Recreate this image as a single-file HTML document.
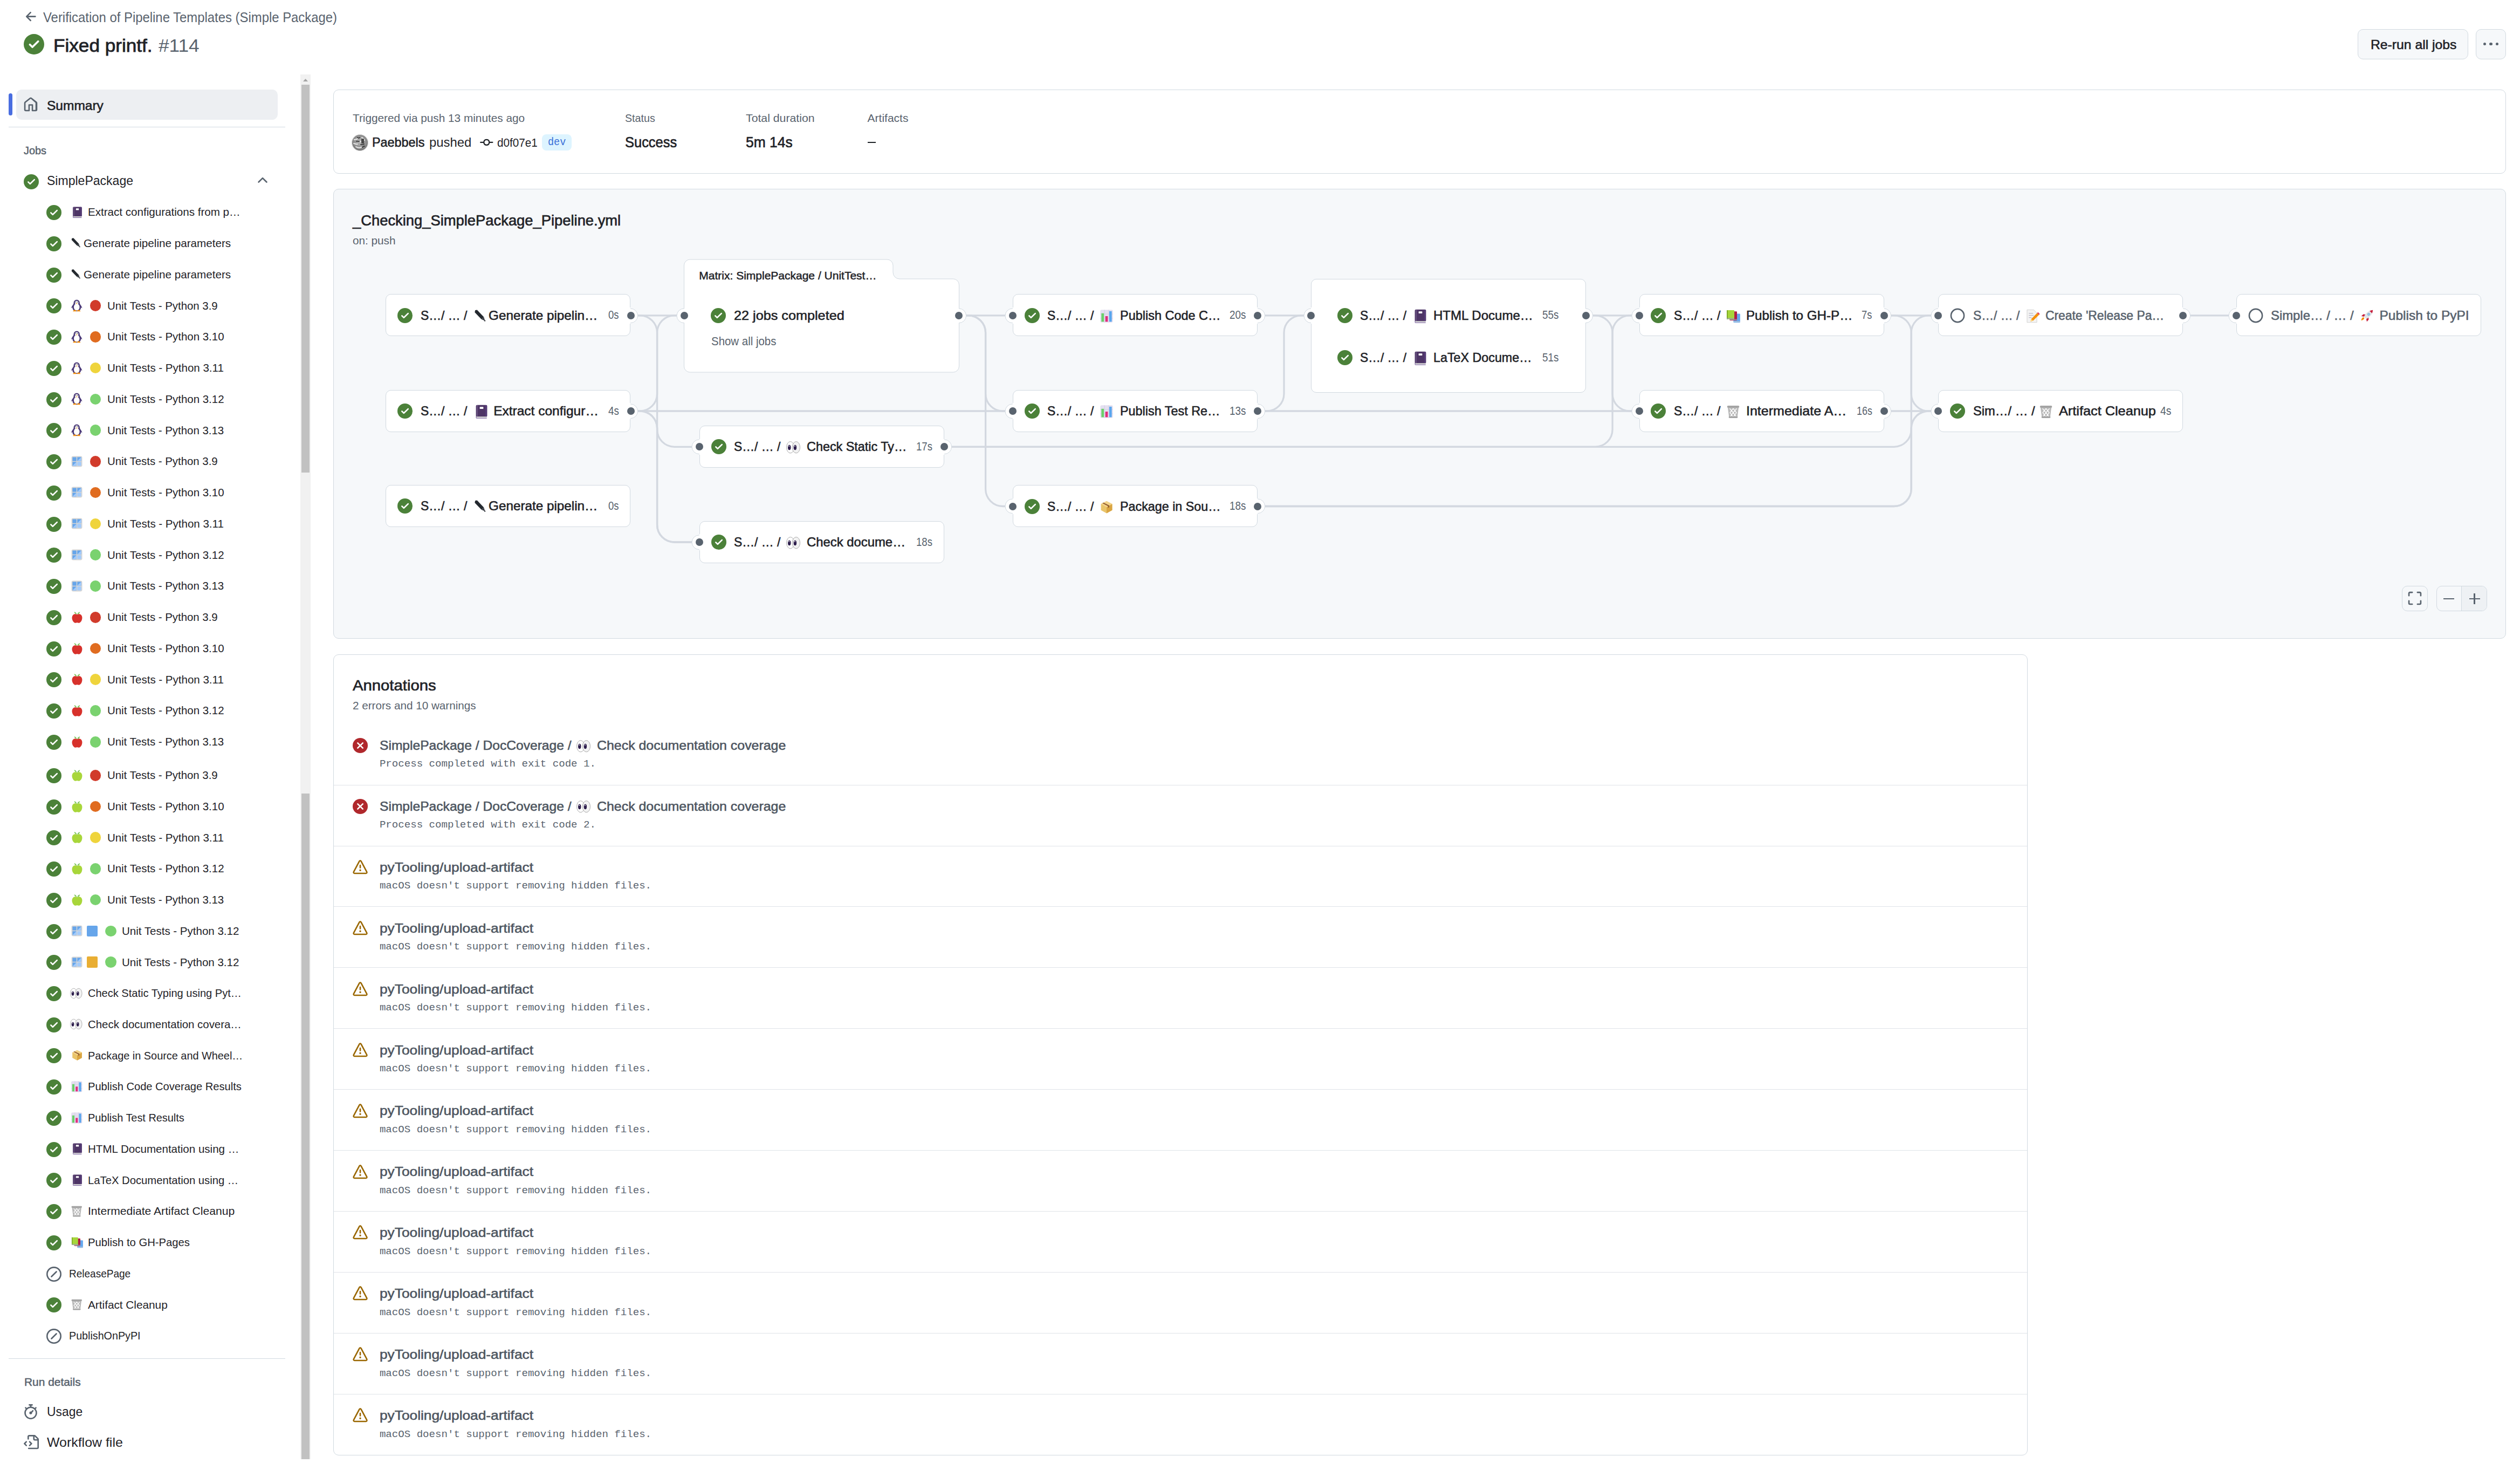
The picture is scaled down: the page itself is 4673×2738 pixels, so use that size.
<!DOCTYPE html><html><head><meta charset="utf-8"><title>GitHub Actions run</title><style>
html,body{margin:0;padding:0;background:#fff;}
body{width:4673px;height:2738px;position:relative;overflow:hidden;font-family:'Liberation Sans',sans-serif;}
.t{position:absolute;white-space:nowrap;transform-origin:0 0;font-family:'Liberation Sans',sans-serif;}
.r{position:absolute;box-sizing:border-box;}
.s{position:absolute;overflow:visible;}
</style></head><body>
<svg class="s" style="left:44.00px;top:17.20px;" width="28.00" height="28.00" viewBox="0 0 16 16"><path fill="#59636e" d="M7.78 12.53a.75.75 0 0 1-1.06 0L2.47 8.28a.75.75 0 0 1 0-1.06l4.25-4.25a.751.751 0 0 1 1.042.018.751.751 0 0 1 .018 1.042L4.81 7h7.44a.75.75 0 0 1 0 1.5H4.81l2.97 2.97a.75.75 0 0 1 0 1.06Z"/></svg>
<div class="t" style="left:80.00px;top:19.09px;font-size:26.00px;line-height:26.00px;color:#59636e;transform:scaleX(0.9183);">Verification of Pipeline Templates (Simple Package)</div>
<svg class="s" style="left:44.00px;top:63.00px;" width="38.00" height="38.00" viewBox="0 0 16 16"><path fill="#4b8139" d="M8 16A8 8 0 1 1 8 0a8 8 0 0 1 0 16Zm3.78-9.72a.749.749 0 0 0-.326-1.275.749.749 0 0 0-.734.215L6.75 9.19 5.28 7.72a.751.751 0 0 0-1.042.018.751.751 0 0 0-.018 1.042l2 2a.75.75 0 0 0 1.06 0Z"/></svg>
<div class="t" style="left:99.00px;top:67.54px;font-size:33.50px;line-height:33.50px;color:#1f2328;-webkit-text-stroke:0.82px #1f2328;transform:scaleX(1.0491);">Fixed printf.</div>
<div class="t" style="left:294.30px;top:67.54px;font-size:33.50px;line-height:33.50px;color:#59636e;transform:scaleX(1.0508);">#114</div>
<div class="r" style="left:4372.00px;top:54.00px;width:205.00px;height:56.00px;background:#f6f8fa;border:1px solid #d1d9e0;border-radius:10px;"></div>
<div class="t" style="left:4395.50px;top:70.76px;font-size:24.50px;line-height:24.50px;color:#1f2328;-webkit-text-stroke:0.60px #1f2328;transform:scaleX(1.0097);">Re-run all jobs</div>
<div class="r" style="left:4591.00px;top:54.00px;width:56.00px;height:56.00px;background:#f6f8fa;border:1px solid #d1d9e0;border-radius:10px;"></div>
<div class="r" style="left:4604.90px;top:78.60px;width:5.20px;height:5.20px;background:#59636e;border-radius:5.2px;"></div>
<div class="r" style="left:4616.40px;top:78.60px;width:5.20px;height:5.20px;background:#59636e;border-radius:5.2px;"></div>
<div class="r" style="left:4627.90px;top:78.60px;width:5.20px;height:5.20px;background:#59636e;border-radius:5.2px;"></div>
<div class="r" style="left:30.00px;top:166.00px;width:485.00px;height:56.00px;background:#edeff2;border-radius:10px;"></div>
<div class="r" style="left:16.00px;top:173.00px;width:7.00px;height:41.00px;background:#4a6ee0;border-radius:4px;"></div>
<svg class="s" style="left:43.25px;top:179.50px;" width="28.00" height="28.00" viewBox="0 0 16 16"><path fill="#59636e" d="M6.906.664a1.749 1.749 0 0 1 2.187 0l5.25 4.2c.415.332.657.835.657 1.367v7.019A1.75 1.75 0 0 1 13.25 15h-3.5a.75.75 0 0 1-.75-.75V9H7v5.25a.75.75 0 0 1-.75.75h-3.5A1.75 1.75 0 0 1 1 13.25V6.23c0-.531.242-1.034.657-1.366l5.25-4.2Zm1.25 1.171a.25.25 0 0 0-.312 0l-5.25 4.2a.25.25 0 0 0-.094.196v7.019c0 .138.112.25.25.25H5.5V8.25a.75.75 0 0 1 .75-.75h3.5a.75.75 0 0 1 .75.75v5.25h2.25a.25.25 0 0 0 .25-.25V6.23a.25.25 0 0 0-.094-.195Z"/></svg>
<div class="t" style="left:87.00px;top:184.26px;font-size:24.50px;line-height:24.50px;color:#1f2328;-webkit-text-stroke:0.60px #1f2328;">Summary</div>
<div class="r" style="left:16.00px;top:234.50px;width:513.00px;height:1.00px;background:#d1d9e0;"></div>
<div class="t" style="left:44.00px;top:268.22px;font-size:21.00px;line-height:21.00px;color:#59636e;-webkit-text-stroke:0.51px #59636e;transform:scaleX(0.9468);">Jobs</div>
<svg class="s" style="left:44.00px;top:323.00px;" width="28.00" height="28.00" viewBox="0 0 16 16"><path fill="#4b8139" d="M8 16A8 8 0 1 1 8 0a8 8 0 0 1 0 16Zm3.78-9.72a.749.749 0 0 0-.326-1.275.749.749 0 0 0-.734.215L6.75 9.19 5.28 7.72a.751.751 0 0 0-1.042.018.751.751 0 0 0-.018 1.042l2 2a.75.75 0 0 0 1.06 0Z"/></svg>
<div class="t" style="left:87.00px;top:323.06px;font-size:24.50px;line-height:24.50px;color:#1f2328;transform:scaleX(0.9399);">SimplePackage</div>
<svg class="s" style="left:472.75px;top:320.25px;" width="28.00" height="28.00" viewBox="0 0 16 16"><path fill="#59636e" d="M3.22 10.53a.749.749 0 0 1 0-1.06l4.25-4.25a.749.749 0 0 1 1.06 0l4.25 4.25a.749.749 0 0 1-1.06 1.06L8 6.811 4.28 10.53a.749.749 0 0 1-1.06 0Z"/></svg>
<svg class="s" style="left:86.00px;top:380.00px;" width="28.00" height="28.00" viewBox="0 0 16 16"><path fill="#4b8139" d="M8 16A8 8 0 1 1 8 0a8 8 0 0 1 0 16Zm3.78-9.72a.749.749 0 0 0-.326-1.275.749.749 0 0 0-.734.215L6.75 9.19 5.28 7.72a.751.751 0 0 0-1.042.018.751.751 0 0 0-.018 1.042l2 2a.75.75 0 0 0 1.06 0Z"/></svg>
<svg class="s" style="left:133.20px;top:382.50px;" width="21.00" height="21.00" viewBox="0 0 20 20"><rect x="2" y="0.5" width="16" height="17" rx="1.6" fill="#4e3566"/><rect x="3.3" y="0.8" width="1.2" height="16.4" fill="#6d5985"/><rect x="15.2" y="0.8" width="2.2" height="16.5" fill="#553b78"/><rect x="7.4" y="3.2" width="5.2" height="3" rx="0.6" fill="#fff"/><path d="M2 17.2h15.5v1.8H3a1 1 0 0 1-1-1Z" fill="#d2d2d2"/><path d="M2 16.5v2.2a1.2 1.2 0 0 0 1.2 1.2H17.5v-0.8H3.2a0.6 0.6 0 0 1 0-1.2" fill="#7a5fa0"/></svg>
<div class="t" style="left:163.40px;top:382.22px;font-size:21.00px;line-height:21.00px;color:#1f2328;transform:scaleX(0.9803);">Extract configurations from p…</div>
<svg class="s" style="left:86.00px;top:437.76px;" width="28.00" height="28.00" viewBox="0 0 16 16"><path fill="#4b8139" d="M8 16A8 8 0 1 1 8 0a8 8 0 0 1 0 16Zm3.78-9.72a.749.749 0 0 0-.326-1.275.749.749 0 0 0-.734.215L6.75 9.19 5.28 7.72a.751.751 0 0 0-1.042.018.751.751 0 0 0-.018 1.042l2 2a.75.75 0 0 0 1.06 0Z"/></svg>
<svg class="s" style="left:130.00px;top:440.26px;" width="21.00" height="21.00" viewBox="0 0 20 20"><path d="M3.2 1.6 L5.9 1.2 L15.6 11.4 L12.2 14.6 L2.6 4.6 Z" fill="#24292f"/><path d="M12.2 14.6 L15.6 11.4 L17.2 16.8 Z" fill="#3b3f46"/><circle cx="17" cy="16.6" r="0.9" fill="#24292f"/></svg>
<div class="t" style="left:155.40px;top:439.98px;font-size:21.00px;line-height:21.00px;color:#1f2328;transform:scaleX(0.9829);">Generate pipeline parameters</div>
<svg class="s" style="left:86.00px;top:495.52px;" width="28.00" height="28.00" viewBox="0 0 16 16"><path fill="#4b8139" d="M8 16A8 8 0 1 1 8 0a8 8 0 0 1 0 16Zm3.78-9.72a.749.749 0 0 0-.326-1.275.749.749 0 0 0-.734.215L6.75 9.19 5.28 7.72a.751.751 0 0 0-1.042.018.751.751 0 0 0-.018 1.042l2 2a.75.75 0 0 0 1.06 0Z"/></svg>
<svg class="s" style="left:130.00px;top:498.02px;" width="21.00" height="21.00" viewBox="0 0 20 20"><path d="M3.2 1.6 L5.9 1.2 L15.6 11.4 L12.2 14.6 L2.6 4.6 Z" fill="#24292f"/><path d="M12.2 14.6 L15.6 11.4 L17.2 16.8 Z" fill="#3b3f46"/><circle cx="17" cy="16.6" r="0.9" fill="#24292f"/></svg>
<div class="t" style="left:155.40px;top:497.74px;font-size:21.00px;line-height:21.00px;color:#1f2328;transform:scaleX(0.9829);">Generate pipeline parameters</div>
<svg class="s" style="left:86.00px;top:553.28px;" width="28.00" height="28.00" viewBox="0 0 16 16"><path fill="#4b8139" d="M8 16A8 8 0 1 1 8 0a8 8 0 0 1 0 16Zm3.78-9.72a.749.749 0 0 0-.326-1.275.749.749 0 0 0-.734.215L6.75 9.19 5.28 7.72a.751.751 0 0 0-1.042.018.751.751 0 0 0-.018 1.042l2 2a.75.75 0 0 0 1.06 0Z"/></svg>
<svg class="s" style="left:131.25px;top:555.03px;" width="22.50" height="22.50" viewBox="0 0 20 20"><path d="M10 0.6c3.2 0 5 2.4 5 5.2 0 1.1.4 2 1.2 3 1.4 1.7 2.4 3.6 2.8 5.6l-2-1c.1 3.6-2.6 6.2-7 6.2s-7.1-2.6-7-6.2l-2 1c.4-2 1.4-3.9 2.8-5.6.8-1 1.2-1.9 1.2-3 0-2.8 1.8-5.2 5-5.2Z" fill="#4b3a78"/><ellipse cx="10" cy="12.6" rx="4.7" ry="5.7" fill="#fff"/><ellipse cx="10" cy="5.5" rx="2.8" ry="3" fill="#fff"/><circle cx="8.7" cy="4.5" r="0.7" fill="#222"/><circle cx="11.3" cy="4.5" r="0.7" fill="#222"/><path d="M8.6 6.3h2.8l-1.4 1.5Z" fill="#f4900c"/><path d="M3.6 19.8 5.2 17.6h3.6l.6 2.2Zm7 0 .6-2.2h3.6l1.6 2.2Z" fill="#f4900c"/></svg>
<div class="r" style="left:166.65px;top:556.23px;width:20.70px;height:20.70px;background:#d13b2b;border-radius:20.7px;"></div>
<div class="t" style="left:198.50px;top:555.50px;font-size:21.00px;line-height:21.00px;color:#1f2328;transform:scaleX(0.9707);">Unit Tests - Python 3.9</div>
<svg class="s" style="left:86.00px;top:611.04px;" width="28.00" height="28.00" viewBox="0 0 16 16"><path fill="#4b8139" d="M8 16A8 8 0 1 1 8 0a8 8 0 0 1 0 16Zm3.78-9.72a.749.749 0 0 0-.326-1.275.749.749 0 0 0-.734.215L6.75 9.19 5.28 7.72a.751.751 0 0 0-1.042.018.751.751 0 0 0-.018 1.042l2 2a.75.75 0 0 0 1.06 0Z"/></svg>
<svg class="s" style="left:131.25px;top:612.79px;" width="22.50" height="22.50" viewBox="0 0 20 20"><path d="M10 0.6c3.2 0 5 2.4 5 5.2 0 1.1.4 2 1.2 3 1.4 1.7 2.4 3.6 2.8 5.6l-2-1c.1 3.6-2.6 6.2-7 6.2s-7.1-2.6-7-6.2l-2 1c.4-2 1.4-3.9 2.8-5.6.8-1 1.2-1.9 1.2-3 0-2.8 1.8-5.2 5-5.2Z" fill="#4b3a78"/><ellipse cx="10" cy="12.6" rx="4.7" ry="5.7" fill="#fff"/><ellipse cx="10" cy="5.5" rx="2.8" ry="3" fill="#fff"/><circle cx="8.7" cy="4.5" r="0.7" fill="#222"/><circle cx="11.3" cy="4.5" r="0.7" fill="#222"/><path d="M8.6 6.3h2.8l-1.4 1.5Z" fill="#f4900c"/><path d="M3.6 19.8 5.2 17.6h3.6l.6 2.2Zm7 0 .6-2.2h3.6l1.6 2.2Z" fill="#f4900c"/></svg>
<div class="r" style="left:166.65px;top:613.99px;width:20.70px;height:20.70px;background:#e06c20;border-radius:20.7px;"></div>
<div class="t" style="left:198.50px;top:613.26px;font-size:21.00px;line-height:21.00px;color:#1f2328;transform:scaleX(0.9728);">Unit Tests - Python 3.10</div>
<svg class="s" style="left:86.00px;top:668.80px;" width="28.00" height="28.00" viewBox="0 0 16 16"><path fill="#4b8139" d="M8 16A8 8 0 1 1 8 0a8 8 0 0 1 0 16Zm3.78-9.72a.749.749 0 0 0-.326-1.275.749.749 0 0 0-.734.215L6.75 9.19 5.28 7.72a.751.751 0 0 0-1.042.018.751.751 0 0 0-.018 1.042l2 2a.75.75 0 0 0 1.06 0Z"/></svg>
<svg class="s" style="left:131.25px;top:670.55px;" width="22.50" height="22.50" viewBox="0 0 20 20"><path d="M10 0.6c3.2 0 5 2.4 5 5.2 0 1.1.4 2 1.2 3 1.4 1.7 2.4 3.6 2.8 5.6l-2-1c.1 3.6-2.6 6.2-7 6.2s-7.1-2.6-7-6.2l-2 1c.4-2 1.4-3.9 2.8-5.6.8-1 1.2-1.9 1.2-3 0-2.8 1.8-5.2 5-5.2Z" fill="#4b3a78"/><ellipse cx="10" cy="12.6" rx="4.7" ry="5.7" fill="#fff"/><ellipse cx="10" cy="5.5" rx="2.8" ry="3" fill="#fff"/><circle cx="8.7" cy="4.5" r="0.7" fill="#222"/><circle cx="11.3" cy="4.5" r="0.7" fill="#222"/><path d="M8.6 6.3h2.8l-1.4 1.5Z" fill="#f4900c"/><path d="M3.6 19.8 5.2 17.6h3.6l.6 2.2Zm7 0 .6-2.2h3.6l1.6 2.2Z" fill="#f4900c"/></svg>
<div class="r" style="left:166.65px;top:671.75px;width:20.70px;height:20.70px;background:#efd43c;border-radius:20.7px;"></div>
<div class="t" style="left:198.50px;top:671.02px;font-size:21.00px;line-height:21.00px;color:#1f2328;transform:scaleX(0.9764);">Unit Tests - Python 3.11</div>
<svg class="s" style="left:86.00px;top:726.56px;" width="28.00" height="28.00" viewBox="0 0 16 16"><path fill="#4b8139" d="M8 16A8 8 0 1 1 8 0a8 8 0 0 1 0 16Zm3.78-9.72a.749.749 0 0 0-.326-1.275.749.749 0 0 0-.734.215L6.75 9.19 5.28 7.72a.751.751 0 0 0-1.042.018.751.751 0 0 0-.018 1.042l2 2a.75.75 0 0 0 1.06 0Z"/></svg>
<svg class="s" style="left:131.25px;top:728.31px;" width="22.50" height="22.50" viewBox="0 0 20 20"><path d="M10 0.6c3.2 0 5 2.4 5 5.2 0 1.1.4 2 1.2 3 1.4 1.7 2.4 3.6 2.8 5.6l-2-1c.1 3.6-2.6 6.2-7 6.2s-7.1-2.6-7-6.2l-2 1c.4-2 1.4-3.9 2.8-5.6.8-1 1.2-1.9 1.2-3 0-2.8 1.8-5.2 5-5.2Z" fill="#4b3a78"/><ellipse cx="10" cy="12.6" rx="4.7" ry="5.7" fill="#fff"/><ellipse cx="10" cy="5.5" rx="2.8" ry="3" fill="#fff"/><circle cx="8.7" cy="4.5" r="0.7" fill="#222"/><circle cx="11.3" cy="4.5" r="0.7" fill="#222"/><path d="M8.6 6.3h2.8l-1.4 1.5Z" fill="#f4900c"/><path d="M3.6 19.8 5.2 17.6h3.6l.6 2.2Zm7 0 .6-2.2h3.6l1.6 2.2Z" fill="#f4900c"/></svg>
<div class="r" style="left:166.65px;top:729.51px;width:20.70px;height:20.70px;background:#7ad26f;border-radius:20.7px;"></div>
<div class="t" style="left:198.50px;top:728.78px;font-size:21.00px;line-height:21.00px;color:#1f2328;transform:scaleX(0.9728);">Unit Tests - Python 3.12</div>
<svg class="s" style="left:86.00px;top:784.32px;" width="28.00" height="28.00" viewBox="0 0 16 16"><path fill="#4b8139" d="M8 16A8 8 0 1 1 8 0a8 8 0 0 1 0 16Zm3.78-9.72a.749.749 0 0 0-.326-1.275.749.749 0 0 0-.734.215L6.75 9.19 5.28 7.72a.751.751 0 0 0-1.042.018.751.751 0 0 0-.018 1.042l2 2a.75.75 0 0 0 1.06 0Z"/></svg>
<svg class="s" style="left:131.25px;top:786.07px;" width="22.50" height="22.50" viewBox="0 0 20 20"><path d="M10 0.6c3.2 0 5 2.4 5 5.2 0 1.1.4 2 1.2 3 1.4 1.7 2.4 3.6 2.8 5.6l-2-1c.1 3.6-2.6 6.2-7 6.2s-7.1-2.6-7-6.2l-2 1c.4-2 1.4-3.9 2.8-5.6.8-1 1.2-1.9 1.2-3 0-2.8 1.8-5.2 5-5.2Z" fill="#4b3a78"/><ellipse cx="10" cy="12.6" rx="4.7" ry="5.7" fill="#fff"/><ellipse cx="10" cy="5.5" rx="2.8" ry="3" fill="#fff"/><circle cx="8.7" cy="4.5" r="0.7" fill="#222"/><circle cx="11.3" cy="4.5" r="0.7" fill="#222"/><path d="M8.6 6.3h2.8l-1.4 1.5Z" fill="#f4900c"/><path d="M3.6 19.8 5.2 17.6h3.6l.6 2.2Zm7 0 .6-2.2h3.6l1.6 2.2Z" fill="#f4900c"/></svg>
<div class="r" style="left:166.65px;top:787.27px;width:20.70px;height:20.70px;background:#7ad26f;border-radius:20.7px;"></div>
<div class="t" style="left:198.50px;top:786.54px;font-size:21.00px;line-height:21.00px;color:#1f2328;transform:scaleX(0.9710);">Unit Tests - Python 3.13</div>
<svg class="s" style="left:86.00px;top:842.08px;" width="28.00" height="28.00" viewBox="0 0 16 16"><path fill="#4b8139" d="M8 16A8 8 0 1 1 8 0a8 8 0 0 1 0 16Zm3.78-9.72a.749.749 0 0 0-.326-1.275.749.749 0 0 0-.734.215L6.75 9.19 5.28 7.72a.751.751 0 0 0-1.042.018.751.751 0 0 0-.018 1.042l2 2a.75.75 0 0 0 1.06 0Z"/></svg>
<svg class="s" style="left:132.00px;top:844.58px;" width="21.00" height="21.00" viewBox="0 0 20 20"><rect x="0.5" y="0.5" width="19" height="19" rx="3" fill="#d6d6d6"/><rect x="2.3" y="2.3" width="7" height="7" rx="0.8" fill="#66a5ea"/><path d="M10.7 2.3h7v7h-7Z" fill="#66a5ea"/><path d="M17.7 2.3v7h-7Z" fill="#a3cbfb"/><path d="M2.3 10.7h7v7h-7Z" fill="#66a5ea"/><path d="M9.3 10.7v7h-7Z" fill="#a3cbfb"/><rect x="10.7" y="10.7" width="7" height="7" rx="0.8" fill="#a3cbfb"/></svg>
<div class="r" style="left:166.65px;top:845.03px;width:20.70px;height:20.70px;background:#d13b2b;border-radius:20.7px;"></div>
<div class="t" style="left:198.50px;top:844.30px;font-size:21.00px;line-height:21.00px;color:#1f2328;transform:scaleX(0.9707);">Unit Tests - Python 3.9</div>
<svg class="s" style="left:86.00px;top:899.84px;" width="28.00" height="28.00" viewBox="0 0 16 16"><path fill="#4b8139" d="M8 16A8 8 0 1 1 8 0a8 8 0 0 1 0 16Zm3.78-9.72a.749.749 0 0 0-.326-1.275.749.749 0 0 0-.734.215L6.75 9.19 5.28 7.72a.751.751 0 0 0-1.042.018.751.751 0 0 0-.018 1.042l2 2a.75.75 0 0 0 1.06 0Z"/></svg>
<svg class="s" style="left:132.00px;top:902.34px;" width="21.00" height="21.00" viewBox="0 0 20 20"><rect x="0.5" y="0.5" width="19" height="19" rx="3" fill="#d6d6d6"/><rect x="2.3" y="2.3" width="7" height="7" rx="0.8" fill="#66a5ea"/><path d="M10.7 2.3h7v7h-7Z" fill="#66a5ea"/><path d="M17.7 2.3v7h-7Z" fill="#a3cbfb"/><path d="M2.3 10.7h7v7h-7Z" fill="#66a5ea"/><path d="M9.3 10.7v7h-7Z" fill="#a3cbfb"/><rect x="10.7" y="10.7" width="7" height="7" rx="0.8" fill="#a3cbfb"/></svg>
<div class="r" style="left:166.65px;top:902.79px;width:20.70px;height:20.70px;background:#e06c20;border-radius:20.7px;"></div>
<div class="t" style="left:198.50px;top:902.06px;font-size:21.00px;line-height:21.00px;color:#1f2328;transform:scaleX(0.9728);">Unit Tests - Python 3.10</div>
<svg class="s" style="left:86.00px;top:957.60px;" width="28.00" height="28.00" viewBox="0 0 16 16"><path fill="#4b8139" d="M8 16A8 8 0 1 1 8 0a8 8 0 0 1 0 16Zm3.78-9.72a.749.749 0 0 0-.326-1.275.749.749 0 0 0-.734.215L6.75 9.19 5.28 7.72a.751.751 0 0 0-1.042.018.751.751 0 0 0-.018 1.042l2 2a.75.75 0 0 0 1.06 0Z"/></svg>
<svg class="s" style="left:132.00px;top:960.10px;" width="21.00" height="21.00" viewBox="0 0 20 20"><rect x="0.5" y="0.5" width="19" height="19" rx="3" fill="#d6d6d6"/><rect x="2.3" y="2.3" width="7" height="7" rx="0.8" fill="#66a5ea"/><path d="M10.7 2.3h7v7h-7Z" fill="#66a5ea"/><path d="M17.7 2.3v7h-7Z" fill="#a3cbfb"/><path d="M2.3 10.7h7v7h-7Z" fill="#66a5ea"/><path d="M9.3 10.7v7h-7Z" fill="#a3cbfb"/><rect x="10.7" y="10.7" width="7" height="7" rx="0.8" fill="#a3cbfb"/></svg>
<div class="r" style="left:166.65px;top:960.55px;width:20.70px;height:20.70px;background:#efd43c;border-radius:20.7px;"></div>
<div class="t" style="left:198.50px;top:959.82px;font-size:21.00px;line-height:21.00px;color:#1f2328;transform:scaleX(0.9764);">Unit Tests - Python 3.11</div>
<svg class="s" style="left:86.00px;top:1015.36px;" width="28.00" height="28.00" viewBox="0 0 16 16"><path fill="#4b8139" d="M8 16A8 8 0 1 1 8 0a8 8 0 0 1 0 16Zm3.78-9.72a.749.749 0 0 0-.326-1.275.749.749 0 0 0-.734.215L6.75 9.19 5.28 7.72a.751.751 0 0 0-1.042.018.751.751 0 0 0-.018 1.042l2 2a.75.75 0 0 0 1.06 0Z"/></svg>
<svg class="s" style="left:132.00px;top:1017.86px;" width="21.00" height="21.00" viewBox="0 0 20 20"><rect x="0.5" y="0.5" width="19" height="19" rx="3" fill="#d6d6d6"/><rect x="2.3" y="2.3" width="7" height="7" rx="0.8" fill="#66a5ea"/><path d="M10.7 2.3h7v7h-7Z" fill="#66a5ea"/><path d="M17.7 2.3v7h-7Z" fill="#a3cbfb"/><path d="M2.3 10.7h7v7h-7Z" fill="#66a5ea"/><path d="M9.3 10.7v7h-7Z" fill="#a3cbfb"/><rect x="10.7" y="10.7" width="7" height="7" rx="0.8" fill="#a3cbfb"/></svg>
<div class="r" style="left:166.65px;top:1018.31px;width:20.70px;height:20.70px;background:#7ad26f;border-radius:20.7px;"></div>
<div class="t" style="left:198.50px;top:1017.58px;font-size:21.00px;line-height:21.00px;color:#1f2328;transform:scaleX(0.9728);">Unit Tests - Python 3.12</div>
<svg class="s" style="left:86.00px;top:1073.12px;" width="28.00" height="28.00" viewBox="0 0 16 16"><path fill="#4b8139" d="M8 16A8 8 0 1 1 8 0a8 8 0 0 1 0 16Zm3.78-9.72a.749.749 0 0 0-.326-1.275.749.749 0 0 0-.734.215L6.75 9.19 5.28 7.72a.751.751 0 0 0-1.042.018.751.751 0 0 0-.018 1.042l2 2a.75.75 0 0 0 1.06 0Z"/></svg>
<svg class="s" style="left:132.00px;top:1075.62px;" width="21.00" height="21.00" viewBox="0 0 20 20"><rect x="0.5" y="0.5" width="19" height="19" rx="3" fill="#d6d6d6"/><rect x="2.3" y="2.3" width="7" height="7" rx="0.8" fill="#66a5ea"/><path d="M10.7 2.3h7v7h-7Z" fill="#66a5ea"/><path d="M17.7 2.3v7h-7Z" fill="#a3cbfb"/><path d="M2.3 10.7h7v7h-7Z" fill="#66a5ea"/><path d="M9.3 10.7v7h-7Z" fill="#a3cbfb"/><rect x="10.7" y="10.7" width="7" height="7" rx="0.8" fill="#a3cbfb"/></svg>
<div class="r" style="left:166.65px;top:1076.07px;width:20.70px;height:20.70px;background:#7ad26f;border-radius:20.7px;"></div>
<div class="t" style="left:198.50px;top:1075.34px;font-size:21.00px;line-height:21.00px;color:#1f2328;transform:scaleX(0.9710);">Unit Tests - Python 3.13</div>
<svg class="s" style="left:86.00px;top:1130.88px;" width="28.00" height="28.00" viewBox="0 0 16 16"><path fill="#4b8139" d="M8 16A8 8 0 1 1 8 0a8 8 0 0 1 0 16Zm3.78-9.72a.749.749 0 0 0-.326-1.275.749.749 0 0 0-.734.215L6.75 9.19 5.28 7.72a.751.751 0 0 0-1.042.018.751.751 0 0 0-.018 1.042l2 2a.75.75 0 0 0 1.06 0Z"/></svg>
<svg class="s" style="left:131.50px;top:1132.88px;" width="22.00" height="22.00" viewBox="0 0 20 20"><path d="M10 5.6c1.8-1 4.4-1.2 6.4.4 2.6 2.2 2.6 6.2 1.4 9.2-1 2.6-3 4.6-5 4.6-1 0-1.6-.5-2.8-.5s-1.8.5-2.8.5c-2 0-4-2-5-4.6-1.2-3-1.2-7 1.4-9.2 2-1.6 4.6-1.4 6.4-.4Z" fill="#d7312b"/><path d="M9.6 5.4C9 3.2 7.4 1.6 5 1.2c.6 2.2 2.2 3.8 4.6 4.2ZM10.4 5.4c.2-2 1.6-3.6 4.4-4.2-.4 2.2-1.8 3.8-4.4 4.2Z" fill="#77c255"/></svg>
<div class="r" style="left:166.65px;top:1133.83px;width:20.70px;height:20.70px;background:#d13b2b;border-radius:20.7px;"></div>
<div class="t" style="left:198.50px;top:1133.10px;font-size:21.00px;line-height:21.00px;color:#1f2328;transform:scaleX(0.9707);">Unit Tests - Python 3.9</div>
<svg class="s" style="left:86.00px;top:1188.64px;" width="28.00" height="28.00" viewBox="0 0 16 16"><path fill="#4b8139" d="M8 16A8 8 0 1 1 8 0a8 8 0 0 1 0 16Zm3.78-9.72a.749.749 0 0 0-.326-1.275.749.749 0 0 0-.734.215L6.75 9.19 5.28 7.72a.751.751 0 0 0-1.042.018.751.751 0 0 0-.018 1.042l2 2a.75.75 0 0 0 1.06 0Z"/></svg>
<svg class="s" style="left:131.50px;top:1190.64px;" width="22.00" height="22.00" viewBox="0 0 20 20"><path d="M10 5.6c1.8-1 4.4-1.2 6.4.4 2.6 2.2 2.6 6.2 1.4 9.2-1 2.6-3 4.6-5 4.6-1 0-1.6-.5-2.8-.5s-1.8.5-2.8.5c-2 0-4-2-5-4.6-1.2-3-1.2-7 1.4-9.2 2-1.6 4.6-1.4 6.4-.4Z" fill="#d7312b"/><path d="M9.6 5.4C9 3.2 7.4 1.6 5 1.2c.6 2.2 2.2 3.8 4.6 4.2ZM10.4 5.4c.2-2 1.6-3.6 4.4-4.2-.4 2.2-1.8 3.8-4.4 4.2Z" fill="#77c255"/></svg>
<div class="r" style="left:166.65px;top:1191.59px;width:20.70px;height:20.70px;background:#e06c20;border-radius:20.7px;"></div>
<div class="t" style="left:198.50px;top:1190.86px;font-size:21.00px;line-height:21.00px;color:#1f2328;transform:scaleX(0.9728);">Unit Tests - Python 3.10</div>
<svg class="s" style="left:86.00px;top:1246.40px;" width="28.00" height="28.00" viewBox="0 0 16 16"><path fill="#4b8139" d="M8 16A8 8 0 1 1 8 0a8 8 0 0 1 0 16Zm3.78-9.72a.749.749 0 0 0-.326-1.275.749.749 0 0 0-.734.215L6.75 9.19 5.28 7.72a.751.751 0 0 0-1.042.018.751.751 0 0 0-.018 1.042l2 2a.75.75 0 0 0 1.06 0Z"/></svg>
<svg class="s" style="left:131.50px;top:1248.40px;" width="22.00" height="22.00" viewBox="0 0 20 20"><path d="M10 5.6c1.8-1 4.4-1.2 6.4.4 2.6 2.2 2.6 6.2 1.4 9.2-1 2.6-3 4.6-5 4.6-1 0-1.6-.5-2.8-.5s-1.8.5-2.8.5c-2 0-4-2-5-4.6-1.2-3-1.2-7 1.4-9.2 2-1.6 4.6-1.4 6.4-.4Z" fill="#d7312b"/><path d="M9.6 5.4C9 3.2 7.4 1.6 5 1.2c.6 2.2 2.2 3.8 4.6 4.2ZM10.4 5.4c.2-2 1.6-3.6 4.4-4.2-.4 2.2-1.8 3.8-4.4 4.2Z" fill="#77c255"/></svg>
<div class="r" style="left:166.65px;top:1249.35px;width:20.70px;height:20.70px;background:#efd43c;border-radius:20.7px;"></div>
<div class="t" style="left:198.50px;top:1248.62px;font-size:21.00px;line-height:21.00px;color:#1f2328;transform:scaleX(0.9764);">Unit Tests - Python 3.11</div>
<svg class="s" style="left:86.00px;top:1304.16px;" width="28.00" height="28.00" viewBox="0 0 16 16"><path fill="#4b8139" d="M8 16A8 8 0 1 1 8 0a8 8 0 0 1 0 16Zm3.78-9.72a.749.749 0 0 0-.326-1.275.749.749 0 0 0-.734.215L6.75 9.19 5.28 7.72a.751.751 0 0 0-1.042.018.751.751 0 0 0-.018 1.042l2 2a.75.75 0 0 0 1.06 0Z"/></svg>
<svg class="s" style="left:131.50px;top:1306.16px;" width="22.00" height="22.00" viewBox="0 0 20 20"><path d="M10 5.6c1.8-1 4.4-1.2 6.4.4 2.6 2.2 2.6 6.2 1.4 9.2-1 2.6-3 4.6-5 4.6-1 0-1.6-.5-2.8-.5s-1.8.5-2.8.5c-2 0-4-2-5-4.6-1.2-3-1.2-7 1.4-9.2 2-1.6 4.6-1.4 6.4-.4Z" fill="#d7312b"/><path d="M9.6 5.4C9 3.2 7.4 1.6 5 1.2c.6 2.2 2.2 3.8 4.6 4.2ZM10.4 5.4c.2-2 1.6-3.6 4.4-4.2-.4 2.2-1.8 3.8-4.4 4.2Z" fill="#77c255"/></svg>
<div class="r" style="left:166.65px;top:1307.11px;width:20.70px;height:20.70px;background:#7ad26f;border-radius:20.7px;"></div>
<div class="t" style="left:198.50px;top:1306.38px;font-size:21.00px;line-height:21.00px;color:#1f2328;transform:scaleX(0.9728);">Unit Tests - Python 3.12</div>
<svg class="s" style="left:86.00px;top:1361.92px;" width="28.00" height="28.00" viewBox="0 0 16 16"><path fill="#4b8139" d="M8 16A8 8 0 1 1 8 0a8 8 0 0 1 0 16Zm3.78-9.72a.749.749 0 0 0-.326-1.275.749.749 0 0 0-.734.215L6.75 9.19 5.28 7.72a.751.751 0 0 0-1.042.018.751.751 0 0 0-.018 1.042l2 2a.75.75 0 0 0 1.06 0Z"/></svg>
<svg class="s" style="left:131.50px;top:1363.92px;" width="22.00" height="22.00" viewBox="0 0 20 20"><path d="M10 5.6c1.8-1 4.4-1.2 6.4.4 2.6 2.2 2.6 6.2 1.4 9.2-1 2.6-3 4.6-5 4.6-1 0-1.6-.5-2.8-.5s-1.8.5-2.8.5c-2 0-4-2-5-4.6-1.2-3-1.2-7 1.4-9.2 2-1.6 4.6-1.4 6.4-.4Z" fill="#d7312b"/><path d="M9.6 5.4C9 3.2 7.4 1.6 5 1.2c.6 2.2 2.2 3.8 4.6 4.2ZM10.4 5.4c.2-2 1.6-3.6 4.4-4.2-.4 2.2-1.8 3.8-4.4 4.2Z" fill="#77c255"/></svg>
<div class="r" style="left:166.65px;top:1364.87px;width:20.70px;height:20.70px;background:#7ad26f;border-radius:20.7px;"></div>
<div class="t" style="left:198.50px;top:1364.14px;font-size:21.00px;line-height:21.00px;color:#1f2328;transform:scaleX(0.9710);">Unit Tests - Python 3.13</div>
<svg class="s" style="left:86.00px;top:1423.90px;" width="28.00" height="28.00" viewBox="0 0 16 16"><path fill="#4b8139" d="M8 16A8 8 0 1 1 8 0a8 8 0 0 1 0 16Zm3.78-9.72a.749.749 0 0 0-.326-1.275.749.749 0 0 0-.734.215L6.75 9.19 5.28 7.72a.751.751 0 0 0-1.042.018.751.751 0 0 0-.018 1.042l2 2a.75.75 0 0 0 1.06 0Z"/></svg>
<svg class="s" style="left:131.50px;top:1425.90px;" width="22.00" height="22.00" viewBox="0 0 20 20"><path d="M10 5.6c1.8-1 4.4-1.2 6.4.4 2.6 2.2 2.6 6.2 1.4 9.2-1 2.6-3 4.6-5 4.6-1 0-1.6-.5-2.8-.5s-1.8.5-2.8.5c-2 0-4-2-5-4.6-1.2-3-1.2-7 1.4-9.2 2-1.6 4.6-1.4 6.4-.4Z" fill="#a8d63a"/><path d="M9.6 5.4C9 3.2 7.4 1.6 5 1.2c.6 2.2 2.2 3.8 4.6 4.2ZM10.4 5.4c.2-2 1.6-3.6 4.4-4.2-.4 2.2-1.8 3.8-4.4 4.2Z" fill="#77c255"/></svg>
<div class="r" style="left:166.65px;top:1426.85px;width:20.70px;height:20.70px;background:#d13b2b;border-radius:20.7px;"></div>
<div class="t" style="left:198.50px;top:1426.12px;font-size:21.00px;line-height:21.00px;color:#1f2328;transform:scaleX(0.9707);">Unit Tests - Python 3.9</div>
<svg class="s" style="left:86.00px;top:1481.63px;" width="28.00" height="28.00" viewBox="0 0 16 16"><path fill="#4b8139" d="M8 16A8 8 0 1 1 8 0a8 8 0 0 1 0 16Zm3.78-9.72a.749.749 0 0 0-.326-1.275.749.749 0 0 0-.734.215L6.75 9.19 5.28 7.72a.751.751 0 0 0-1.042.018.751.751 0 0 0-.018 1.042l2 2a.75.75 0 0 0 1.06 0Z"/></svg>
<svg class="s" style="left:131.50px;top:1483.63px;" width="22.00" height="22.00" viewBox="0 0 20 20"><path d="M10 5.6c1.8-1 4.4-1.2 6.4.4 2.6 2.2 2.6 6.2 1.4 9.2-1 2.6-3 4.6-5 4.6-1 0-1.6-.5-2.8-.5s-1.8.5-2.8.5c-2 0-4-2-5-4.6-1.2-3-1.2-7 1.4-9.2 2-1.6 4.6-1.4 6.4-.4Z" fill="#a8d63a"/><path d="M9.6 5.4C9 3.2 7.4 1.6 5 1.2c.6 2.2 2.2 3.8 4.6 4.2ZM10.4 5.4c.2-2 1.6-3.6 4.4-4.2-.4 2.2-1.8 3.8-4.4 4.2Z" fill="#77c255"/></svg>
<div class="r" style="left:166.65px;top:1484.58px;width:20.70px;height:20.70px;background:#e06c20;border-radius:20.7px;"></div>
<div class="t" style="left:198.50px;top:1483.85px;font-size:21.00px;line-height:21.00px;color:#1f2328;transform:scaleX(0.9728);">Unit Tests - Python 3.10</div>
<svg class="s" style="left:86.00px;top:1539.36px;" width="28.00" height="28.00" viewBox="0 0 16 16"><path fill="#4b8139" d="M8 16A8 8 0 1 1 8 0a8 8 0 0 1 0 16Zm3.78-9.72a.749.749 0 0 0-.326-1.275.749.749 0 0 0-.734.215L6.75 9.19 5.28 7.72a.751.751 0 0 0-1.042.018.751.751 0 0 0-.018 1.042l2 2a.75.75 0 0 0 1.06 0Z"/></svg>
<svg class="s" style="left:131.50px;top:1541.36px;" width="22.00" height="22.00" viewBox="0 0 20 20"><path d="M10 5.6c1.8-1 4.4-1.2 6.4.4 2.6 2.2 2.6 6.2 1.4 9.2-1 2.6-3 4.6-5 4.6-1 0-1.6-.5-2.8-.5s-1.8.5-2.8.5c-2 0-4-2-5-4.6-1.2-3-1.2-7 1.4-9.2 2-1.6 4.6-1.4 6.4-.4Z" fill="#a8d63a"/><path d="M9.6 5.4C9 3.2 7.4 1.6 5 1.2c.6 2.2 2.2 3.8 4.6 4.2ZM10.4 5.4c.2-2 1.6-3.6 4.4-4.2-.4 2.2-1.8 3.8-4.4 4.2Z" fill="#77c255"/></svg>
<div class="r" style="left:166.65px;top:1542.31px;width:20.70px;height:20.70px;background:#efd43c;border-radius:20.7px;"></div>
<div class="t" style="left:198.50px;top:1541.58px;font-size:21.00px;line-height:21.00px;color:#1f2328;transform:scaleX(0.9764);">Unit Tests - Python 3.11</div>
<svg class="s" style="left:86.00px;top:1597.09px;" width="28.00" height="28.00" viewBox="0 0 16 16"><path fill="#4b8139" d="M8 16A8 8 0 1 1 8 0a8 8 0 0 1 0 16Zm3.78-9.72a.749.749 0 0 0-.326-1.275.749.749 0 0 0-.734.215L6.75 9.19 5.28 7.72a.751.751 0 0 0-1.042.018.751.751 0 0 0-.018 1.042l2 2a.75.75 0 0 0 1.06 0Z"/></svg>
<svg class="s" style="left:131.50px;top:1599.09px;" width="22.00" height="22.00" viewBox="0 0 20 20"><path d="M10 5.6c1.8-1 4.4-1.2 6.4.4 2.6 2.2 2.6 6.2 1.4 9.2-1 2.6-3 4.6-5 4.6-1 0-1.6-.5-2.8-.5s-1.8.5-2.8.5c-2 0-4-2-5-4.6-1.2-3-1.2-7 1.4-9.2 2-1.6 4.6-1.4 6.4-.4Z" fill="#a8d63a"/><path d="M9.6 5.4C9 3.2 7.4 1.6 5 1.2c.6 2.2 2.2 3.8 4.6 4.2ZM10.4 5.4c.2-2 1.6-3.6 4.4-4.2-.4 2.2-1.8 3.8-4.4 4.2Z" fill="#77c255"/></svg>
<div class="r" style="left:166.65px;top:1600.04px;width:20.70px;height:20.70px;background:#7ad26f;border-radius:20.7px;"></div>
<div class="t" style="left:198.50px;top:1599.31px;font-size:21.00px;line-height:21.00px;color:#1f2328;transform:scaleX(0.9728);">Unit Tests - Python 3.12</div>
<svg class="s" style="left:86.00px;top:1654.82px;" width="28.00" height="28.00" viewBox="0 0 16 16"><path fill="#4b8139" d="M8 16A8 8 0 1 1 8 0a8 8 0 0 1 0 16Zm3.78-9.72a.749.749 0 0 0-.326-1.275.749.749 0 0 0-.734.215L6.75 9.19 5.28 7.72a.751.751 0 0 0-1.042.018.751.751 0 0 0-.018 1.042l2 2a.75.75 0 0 0 1.06 0Z"/></svg>
<svg class="s" style="left:131.50px;top:1656.82px;" width="22.00" height="22.00" viewBox="0 0 20 20"><path d="M10 5.6c1.8-1 4.4-1.2 6.4.4 2.6 2.2 2.6 6.2 1.4 9.2-1 2.6-3 4.6-5 4.6-1 0-1.6-.5-2.8-.5s-1.8.5-2.8.5c-2 0-4-2-5-4.6-1.2-3-1.2-7 1.4-9.2 2-1.6 4.6-1.4 6.4-.4Z" fill="#a8d63a"/><path d="M9.6 5.4C9 3.2 7.4 1.6 5 1.2c.6 2.2 2.2 3.8 4.6 4.2ZM10.4 5.4c.2-2 1.6-3.6 4.4-4.2-.4 2.2-1.8 3.8-4.4 4.2Z" fill="#77c255"/></svg>
<div class="r" style="left:166.65px;top:1657.77px;width:20.70px;height:20.70px;background:#7ad26f;border-radius:20.7px;"></div>
<div class="t" style="left:198.50px;top:1657.04px;font-size:21.00px;line-height:21.00px;color:#1f2328;transform:scaleX(0.9710);">Unit Tests - Python 3.13</div>
<svg class="s" style="left:86.00px;top:1712.55px;" width="28.00" height="28.00" viewBox="0 0 16 16"><path fill="#4b8139" d="M8 16A8 8 0 1 1 8 0a8 8 0 0 1 0 16Zm3.78-9.72a.749.749 0 0 0-.326-1.275.749.749 0 0 0-.734.215L6.75 9.19 5.28 7.72a.751.751 0 0 0-1.042.018.751.751 0 0 0-.018 1.042l2 2a.75.75 0 0 0 1.06 0Z"/></svg>
<svg class="s" style="left:132.00px;top:1715.05px;" width="21.00" height="21.00" viewBox="0 0 20 20"><rect x="0.5" y="0.5" width="19" height="19" rx="3" fill="#d6d6d6"/><rect x="2.3" y="2.3" width="7" height="7" rx="0.8" fill="#66a5ea"/><path d="M10.7 2.3h7v7h-7Z" fill="#66a5ea"/><path d="M17.7 2.3v7h-7Z" fill="#a3cbfb"/><path d="M2.3 10.7h7v7h-7Z" fill="#66a5ea"/><path d="M9.3 10.7v7h-7Z" fill="#a3cbfb"/><rect x="10.7" y="10.7" width="7" height="7" rx="0.8" fill="#a3cbfb"/></svg>
<div class="r" style="left:160.90px;top:1715.65px;width:20.40px;height:20.40px;background:#66a5ea;border-radius:2px;"></div>
<div class="r" style="left:195.25px;top:1715.50px;width:20.70px;height:20.70px;background:#7ad26f;border-radius:20.7px;"></div>
<div class="t" style="left:226.30px;top:1714.77px;font-size:21.00px;line-height:21.00px;color:#1f2328;transform:scaleX(0.9763);">Unit Tests - Python 3.12</div>
<svg class="s" style="left:86.00px;top:1770.28px;" width="28.00" height="28.00" viewBox="0 0 16 16"><path fill="#4b8139" d="M8 16A8 8 0 1 1 8 0a8 8 0 0 1 0 16Zm3.78-9.72a.749.749 0 0 0-.326-1.275.749.749 0 0 0-.734.215L6.75 9.19 5.28 7.72a.751.751 0 0 0-1.042.018.751.751 0 0 0-.018 1.042l2 2a.75.75 0 0 0 1.06 0Z"/></svg>
<svg class="s" style="left:132.00px;top:1772.78px;" width="21.00" height="21.00" viewBox="0 0 20 20"><rect x="0.5" y="0.5" width="19" height="19" rx="3" fill="#d6d6d6"/><rect x="2.3" y="2.3" width="7" height="7" rx="0.8" fill="#66a5ea"/><path d="M10.7 2.3h7v7h-7Z" fill="#66a5ea"/><path d="M17.7 2.3v7h-7Z" fill="#a3cbfb"/><path d="M2.3 10.7h7v7h-7Z" fill="#66a5ea"/><path d="M9.3 10.7v7h-7Z" fill="#a3cbfb"/><rect x="10.7" y="10.7" width="7" height="7" rx="0.8" fill="#a3cbfb"/></svg>
<div class="r" style="left:160.90px;top:1773.38px;width:20.40px;height:20.40px;background:#e9ae33;border-radius:2px;"></div>
<div class="r" style="left:195.25px;top:1773.23px;width:20.70px;height:20.70px;background:#7ad26f;border-radius:20.7px;"></div>
<div class="t" style="left:226.30px;top:1772.50px;font-size:21.00px;line-height:21.00px;color:#1f2328;transform:scaleX(0.9763);">Unit Tests - Python 3.12</div>
<svg class="s" style="left:86.00px;top:1828.01px;" width="28.00" height="28.00" viewBox="0 0 16 16"><path fill="#4b8139" d="M8 16A8 8 0 1 1 8 0a8 8 0 0 1 0 16Zm3.78-9.72a.749.749 0 0 0-.326-1.275.749.749 0 0 0-.734.215L6.75 9.19 5.28 7.72a.751.751 0 0 0-1.042.018.751.751 0 0 0-.018 1.042l2 2a.75.75 0 0 0 1.06 0Z"/></svg>
<svg class="s" style="left:130.25px;top:1829.76px;" width="22.50" height="22.50" viewBox="0 0 20 20"><ellipse cx="5.9" cy="10.2" rx="5.5" ry="8.2" fill="#fff" stroke="#a0a0a0" stroke-width="0.7"/><ellipse cx="14.1" cy="10.2" rx="5.5" ry="8.2" fill="#f2f2f2" stroke="#a0a0a0" stroke-width="0.7"/><ellipse cx="4.4" cy="10.4" rx="2.1" ry="3.6" fill="#2e1f4d"/><ellipse cx="12.6" cy="10.4" rx="2.1" ry="3.6" fill="#2e1f4d"/><circle cx="4.0" cy="8.4" r="0.7" fill="#fff"/><circle cx="12.2" cy="8.4" r="0.7" fill="#fff"/></svg>
<div class="t" style="left:162.50px;top:1830.23px;font-size:21.00px;line-height:21.00px;color:#1f2328;transform:scaleX(0.9543);">Check Static Typing using Pyt…</div>
<svg class="s" style="left:86.00px;top:1885.74px;" width="28.00" height="28.00" viewBox="0 0 16 16"><path fill="#4b8139" d="M8 16A8 8 0 1 1 8 0a8 8 0 0 1 0 16Zm3.78-9.72a.749.749 0 0 0-.326-1.275.749.749 0 0 0-.734.215L6.75 9.19 5.28 7.72a.751.751 0 0 0-1.042.018.751.751 0 0 0-.018 1.042l2 2a.75.75 0 0 0 1.06 0Z"/></svg>
<svg class="s" style="left:130.25px;top:1887.49px;" width="22.50" height="22.50" viewBox="0 0 20 20"><ellipse cx="5.9" cy="10.2" rx="5.5" ry="8.2" fill="#fff" stroke="#a0a0a0" stroke-width="0.7"/><ellipse cx="14.1" cy="10.2" rx="5.5" ry="8.2" fill="#f2f2f2" stroke="#a0a0a0" stroke-width="0.7"/><ellipse cx="4.4" cy="10.4" rx="2.1" ry="3.6" fill="#2e1f4d"/><ellipse cx="12.6" cy="10.4" rx="2.1" ry="3.6" fill="#2e1f4d"/><circle cx="4.0" cy="8.4" r="0.7" fill="#fff"/><circle cx="12.2" cy="8.4" r="0.7" fill="#fff"/></svg>
<div class="t" style="left:162.50px;top:1887.96px;font-size:21.00px;line-height:21.00px;color:#1f2328;transform:scaleX(0.9720);">Check documentation covera…</div>
<svg class="s" style="left:86.00px;top:1943.47px;" width="28.00" height="28.00" viewBox="0 0 16 16"><path fill="#4b8139" d="M8 16A8 8 0 1 1 8 0a8 8 0 0 1 0 16Zm3.78-9.72a.749.749 0 0 0-.326-1.275.749.749 0 0 0-.734.215L6.75 9.19 5.28 7.72a.751.751 0 0 0-1.042.018.751.751 0 0 0-.018 1.042l2 2a.75.75 0 0 0 1.06 0Z"/></svg>
<svg class="s" style="left:131.50px;top:1945.47px;" width="22.00" height="22.00" viewBox="0 0 20 20"><path d="M10 1.5 18 5.5v9L10 18.8 2 14.5v-9Z" fill="#e9c46a"/><path d="M10 10.2 18 5.5v9L10 18.8Z" fill="#d9a441"/><path d="M2 5.5 10 1.5l8 4-8 4.7Z" fill="#f3d38a"/><path d="M5.6 3.6 13.8 7.6v2.6l-1.8 1v-2.6L4 4.4Z" fill="#8f5a2e"/></svg>
<div class="t" style="left:162.50px;top:1945.69px;font-size:21.00px;line-height:21.00px;color:#1f2328;transform:scaleX(0.9463);">Package in Source and Wheel…</div>
<svg class="s" style="left:86.00px;top:2001.20px;" width="28.00" height="28.00" viewBox="0 0 16 16"><path fill="#4b8139" d="M8 16A8 8 0 1 1 8 0a8 8 0 0 1 0 16Zm3.78-9.72a.749.749 0 0 0-.326-1.275.749.749 0 0 0-.734.215L6.75 9.19 5.28 7.72a.751.751 0 0 0-1.042.018.751.751 0 0 0-.018 1.042l2 2a.75.75 0 0 0 1.06 0Z"/></svg>
<svg class="s" style="left:131.25px;top:2002.95px;" width="22.50" height="22.50" viewBox="0 0 20 20"><rect x="1" y="1" width="18" height="18" rx="2" fill="#e4e0f0"/><path d="M1 7h18M1 13h18M7 1v18M13 1v18" stroke="#cfc8e2" stroke-width="0.6"/><rect x="2.6" y="6" width="3.6" height="12" fill="#6bd06a"/><rect x="8.2" y="10" width="3.6" height="8" fill="#e12c7c"/><rect x="13.8" y="3" width="3.6" height="15" fill="#5aa6ee"/></svg>
<div class="t" style="left:162.50px;top:2003.42px;font-size:21.00px;line-height:21.00px;color:#1f2328;transform:scaleX(0.9568);">Publish Code Coverage Results</div>
<svg class="s" style="left:86.00px;top:2058.93px;" width="28.00" height="28.00" viewBox="0 0 16 16"><path fill="#4b8139" d="M8 16A8 8 0 1 1 8 0a8 8 0 0 1 0 16Zm3.78-9.72a.749.749 0 0 0-.326-1.275.749.749 0 0 0-.734.215L6.75 9.19 5.28 7.72a.751.751 0 0 0-1.042.018.751.751 0 0 0-.018 1.042l2 2a.75.75 0 0 0 1.06 0Z"/></svg>
<svg class="s" style="left:131.25px;top:2060.68px;" width="22.50" height="22.50" viewBox="0 0 20 20"><rect x="1" y="1" width="18" height="18" rx="2" fill="#e4e0f0"/><path d="M1 7h18M1 13h18M7 1v18M13 1v18" stroke="#cfc8e2" stroke-width="0.6"/><rect x="2.6" y="6" width="3.6" height="12" fill="#6bd06a"/><rect x="8.2" y="10" width="3.6" height="8" fill="#e12c7c"/><rect x="13.8" y="3" width="3.6" height="15" fill="#5aa6ee"/></svg>
<div class="t" style="left:162.50px;top:2061.15px;font-size:21.00px;line-height:21.00px;color:#1f2328;transform:scaleX(0.9470);">Publish Test Results</div>
<svg class="s" style="left:86.00px;top:2116.66px;" width="28.00" height="28.00" viewBox="0 0 16 16"><path fill="#4b8139" d="M8 16A8 8 0 1 1 8 0a8 8 0 0 1 0 16Zm3.78-9.72a.749.749 0 0 0-.326-1.275.749.749 0 0 0-.734.215L6.75 9.19 5.28 7.72a.751.751 0 0 0-1.042.018.751.751 0 0 0-.018 1.042l2 2a.75.75 0 0 0 1.06 0Z"/></svg>
<svg class="s" style="left:133.20px;top:2119.16px;" width="21.00" height="21.00" viewBox="0 0 20 20"><rect x="2" y="0.5" width="16" height="17" rx="1.6" fill="#4e3566"/><rect x="3.3" y="0.8" width="1.2" height="16.4" fill="#6d5985"/><rect x="15.2" y="0.8" width="2.2" height="16.5" fill="#553b78"/><rect x="7.4" y="3.2" width="5.2" height="3" rx="0.6" fill="#fff"/><path d="M2 17.2h15.5v1.8H3a1 1 0 0 1-1-1Z" fill="#d2d2d2"/><path d="M2 16.5v2.2a1.2 1.2 0 0 0 1.2 1.2H17.5v-0.8H3.2a0.6 0.6 0 0 1 0-1.2" fill="#7a5fa0"/></svg>
<div class="t" style="left:162.50px;top:2118.88px;font-size:21.00px;line-height:21.00px;color:#1f2328;transform:scaleX(0.9789);">HTML Documentation using …</div>
<svg class="s" style="left:86.00px;top:2174.39px;" width="28.00" height="28.00" viewBox="0 0 16 16"><path fill="#4b8139" d="M8 16A8 8 0 1 1 8 0a8 8 0 0 1 0 16Zm3.78-9.72a.749.749 0 0 0-.326-1.275.749.749 0 0 0-.734.215L6.75 9.19 5.28 7.72a.751.751 0 0 0-1.042.018.751.751 0 0 0-.018 1.042l2 2a.75.75 0 0 0 1.06 0Z"/></svg>
<svg class="s" style="left:133.20px;top:2176.89px;" width="21.00" height="21.00" viewBox="0 0 20 20"><rect x="2" y="0.5" width="16" height="17" rx="1.6" fill="#4e3566"/><rect x="3.3" y="0.8" width="1.2" height="16.4" fill="#6d5985"/><rect x="15.2" y="0.8" width="2.2" height="16.5" fill="#553b78"/><rect x="7.4" y="3.2" width="5.2" height="3" rx="0.6" fill="#fff"/><path d="M2 17.2h15.5v1.8H3a1 1 0 0 1-1-1Z" fill="#d2d2d2"/><path d="M2 16.5v2.2a1.2 1.2 0 0 0 1.2 1.2H17.5v-0.8H3.2a0.6 0.6 0 0 1 0-1.2" fill="#7a5fa0"/></svg>
<div class="t" style="left:162.50px;top:2176.61px;font-size:21.00px;line-height:21.00px;color:#1f2328;transform:scaleX(0.9641);">LaTeX Documentation using …</div>
<svg class="s" style="left:86.00px;top:2232.12px;" width="28.00" height="28.00" viewBox="0 0 16 16"><path fill="#4b8139" d="M8 16A8 8 0 1 1 8 0a8 8 0 0 1 0 16Zm3.78-9.72a.749.749 0 0 0-.326-1.275.749.749 0 0 0-.734.215L6.75 9.19 5.28 7.72a.751.751 0 0 0-1.042.018.751.751 0 0 0-.018 1.042l2 2a.75.75 0 0 0 1.06 0Z"/></svg>
<svg class="s" style="left:131.25px;top:2233.87px;" width="22.50" height="22.50" viewBox="0 0 20 20"><path d="M2.2 3.6h15.6l-1.8 14.2H4Z" fill="#b9b9b9"/><path d="M5 5.6 7.6 8.6 5.4 11.6 7.8 14.6 5.8 17M10 5.6 12.4 8.6 10 11.6 12.4 14.6 10.6 17M10 5.6 7.6 8.6 10 11.6 7.6 14.6 9.4 17M15 5.6 12.4 8.6 14.6 11.6 12.2 14.6 14.2 17" stroke="#fff" stroke-width="1.05" fill="none"/><rect x="1.4" y="1.6" width="17.2" height="2.8" rx="1.2" fill="#a4a4a4"/><rect x="3.6" y="16.8" width="12.8" height="2.4" rx="1.1" fill="#a4a4a4"/></svg>
<div class="t" style="left:162.50px;top:2234.34px;font-size:21.00px;line-height:21.00px;color:#1f2328;transform:scaleX(1.0051);">Intermediate Artifact Cleanup</div>
<svg class="s" style="left:86.00px;top:2289.85px;" width="28.00" height="28.00" viewBox="0 0 16 16"><path fill="#4b8139" d="M8 16A8 8 0 1 1 8 0a8 8 0 0 1 0 16Zm3.78-9.72a.749.749 0 0 0-.326-1.275.749.749 0 0 0-.734.215L6.75 9.19 5.28 7.72a.751.751 0 0 0-1.042.018.751.751 0 0 0-.018 1.042l2 2a.75.75 0 0 0 1.06 0Z"/></svg>
<svg class="s" style="left:131.50px;top:2291.85px;" width="22.00" height="22.00" viewBox="0 0 20 20"><rect x="10.3" y="6.5" width="9.6" height="12.8" rx="1" fill="#64a8ee"/><rect x="10.3" y="17.4" width="9.6" height="1.2" fill="#b9c6d6"/><rect x="4.9" y="3.3" width="10.5" height="12.8" rx="1" fill="#b01c45"/><rect x="4.9" y="14.4" width="10.5" height="1.1" fill="#9aa0a8"/><rect x="0.9" y="1.6" width="10.7" height="12.9" rx="0.8" fill="#a6d53a"/><rect x="0.9" y="1.6" width="1.2" height="12.9" fill="#6f9f1f"/><rect x="0.9" y="12.8" width="10.7" height="1.3" fill="#9aa8a0"/></svg>
<div class="t" style="left:162.50px;top:2292.07px;font-size:21.00px;line-height:21.00px;color:#1f2328;transform:scaleX(0.9633);">Publish to GH-Pages</div>
<svg class="s" style="left:86.00px;top:2347.58px;" width="28.00" height="28.00" viewBox="0 0 16 16"><path fill="#59636e" d="M0 8a8 8 0 1 1 16 0A8 8 0 0 1 0 8Zm1.5 0a6.5 6.5 0 1 0 13 0 6.5 6.5 0 0 0-13 0Z"/><path stroke="#59636e" stroke-width="1.5" stroke-linecap="round" d="M10.6 5.4 5.4 10.6"/></svg>
<div class="t" style="left:128.40px;top:2349.80px;font-size:21.00px;line-height:21.00px;color:#1f2328;transform:scaleX(0.9049);">ReleasePage</div>
<svg class="s" style="left:86.00px;top:2405.31px;" width="28.00" height="28.00" viewBox="0 0 16 16"><path fill="#4b8139" d="M8 16A8 8 0 1 1 8 0a8 8 0 0 1 0 16Zm3.78-9.72a.749.749 0 0 0-.326-1.275.749.749 0 0 0-.734.215L6.75 9.19 5.28 7.72a.751.751 0 0 0-1.042.018.751.751 0 0 0-.018 1.042l2 2a.75.75 0 0 0 1.06 0Z"/></svg>
<svg class="s" style="left:131.25px;top:2407.06px;" width="22.50" height="22.50" viewBox="0 0 20 20"><path d="M2.2 3.6h15.6l-1.8 14.2H4Z" fill="#b9b9b9"/><path d="M5 5.6 7.6 8.6 5.4 11.6 7.8 14.6 5.8 17M10 5.6 12.4 8.6 10 11.6 12.4 14.6 10.6 17M10 5.6 7.6 8.6 10 11.6 7.6 14.6 9.4 17M15 5.6 12.4 8.6 14.6 11.6 12.2 14.6 14.2 17" stroke="#fff" stroke-width="1.05" fill="none"/><rect x="1.4" y="1.6" width="17.2" height="2.8" rx="1.2" fill="#a4a4a4"/><rect x="3.6" y="16.8" width="12.8" height="2.4" rx="1.1" fill="#a4a4a4"/></svg>
<div class="t" style="left:163.00px;top:2407.53px;font-size:21.00px;line-height:21.00px;color:#1f2328;transform:scaleX(0.9885);">Artifact Cleanup</div>
<svg class="s" style="left:86.00px;top:2463.04px;" width="28.00" height="28.00" viewBox="0 0 16 16"><path fill="#59636e" d="M0 8a8 8 0 1 1 16 0A8 8 0 0 1 0 8Zm1.5 0a6.5 6.5 0 1 0 13 0 6.5 6.5 0 0 0-13 0Z"/><path stroke="#59636e" stroke-width="1.5" stroke-linecap="round" d="M10.6 5.4 5.4 10.6"/></svg>
<div class="t" style="left:128.40px;top:2465.26px;font-size:21.00px;line-height:21.00px;color:#1f2328;transform:scaleX(0.9381);">PublishOnPyPI</div>
<div class="r" style="left:16.00px;top:2517.50px;width:513.00px;height:1.00px;background:#d1d9e0;"></div>
<div class="t" style="left:44.50px;top:2551.22px;font-size:21.00px;line-height:21.00px;color:#59636e;-webkit-text-stroke:0.51px #59636e;transform:scaleX(0.9956);">Run details</div>
<svg class="s" style="left:42.80px;top:2602.50px;" width="28.00" height="28.00" viewBox="0 0 16 16"><path fill="#59636e" d="M5.75.75A.75.75 0 0 1 6.5 0h3a.75.75 0 0 1 0 1.5h-.75v1l-.001.041a6.724 6.724 0 0 1 3.464 1.435l.007-.006.75-.75a.751.751 0 0 1 1.042.018.751.751 0 0 1 .018 1.042l-.75.75-.006.007a6.75 6.75 0 1 1-10.548 0L2.72 5.03l-.75-.75a.751.751 0 0 1 .018-1.042.751.751 0 0 1 1.042-.018l.75.75.007.006A6.72 6.72 0 0 1 7.25 2.541V1.5H6.5a.75.75 0 0 1-.75-.75ZM8 14.5a5.25 5.25 0 1 0-.001-10.501A5.25 5.25 0 0 0 8 14.5Zm.389-6.7 1.33-1.33a.75.75 0 1 1 1.061 1.06L9.45 8.861A1.503 1.503 0 0 1 8 10.75a1.499 1.499 0 1 1 .389-2.95Z"/></svg>
<div class="t" style="left:86.60px;top:2605.26px;font-size:24.50px;line-height:24.50px;color:#1f2328;transform:scaleX(0.9333);">Usage</div>
<svg class="s" style="left:44.00px;top:2659.60px;" width="28.00" height="28.00" viewBox="0 0 16 16"><path fill="#59636e" d="M4 1.75C4 .784 4.784 0 5.750 0h5.586c.464 0 .909.184 1.237.513l2.914 2.914c.329.328.513.773.513 1.237v8.586A1.75 1.75 0 0 1 14.25 15h-9a.75.75 0 0 1 0-1.5h9a.25.25 0 0 0 .25-.25V6h-2.75A1.75 1.75 0 0 1 10 4.25V1.5H5.75a.25.25 0 0 0-.25.25v2.5a.75.75 0 0 1-1.5 0Zm1.72 4.970a.75.75 0 0 1 1.06 0l2 2a.75.75 0 0 1 0 1.06l-2 2a.749.749 0 0 1-1.275-.326.749.749 0 0 1 .215-.734l1.47-1.47-1.47-1.470a.75.75 0 0 1 0-1.06ZM3.28 7.78 1.81 9.25l1.47 1.47a.751.751 0 0 1-.018 1.042.751.751 0 0 1-1.042.018l-2-2a.75.75 0 0 1 0-1.060l2-2a.751.751 0 0 1 1.042.018.751.751 0 0 1 .018 1.042Zm8.22-6.218V4.25c0 .138.112.25.25.25h2.688l-.011-.013-2.914-2.914-.013-.011Z"/></svg>
<div class="t" style="left:86.60px;top:2661.66px;font-size:24.50px;line-height:24.50px;color:#1f2328;transform:scaleX(1.0172);">Workflow file</div>
<div class="r" style="left:557.00px;top:138.00px;width:19.00px;height:2567.00px;background:#f1f1f1;"></div>
<svg class="s" style="left:562.00px;top:146.00px;" width="9.00" height="5.00" viewBox="0 0 9 5"><path d="M4.5 0 9 5H0Z" fill="#a3a3a3"/></svg>
<div class="r" style="left:559.00px;top:157.00px;width:15.00px;height:719.00px;background:#c1c1c1;"></div>
<div class="r" style="left:559.00px;top:1471.00px;width:15.00px;height:1234.00px;background:#c1c1c1;"></div>
<div class="r" style="left:618.00px;top:166.00px;width:4029.00px;height:155.50px;background:#fff;border:1px solid #d1d9e0;border-radius:10px;"></div>
<div class="t" style="left:653.80px;top:208.22px;font-size:21.00px;line-height:21.00px;color:#59636e;transform:scaleX(0.9892);">Triggered via push 13 minutes ago</div>
<svg class="s" style="left:651.50px;top:249.40px;" width="31.00" height="31.00" viewBox="0 0 31 31"><defs><radialGradient id="av" cx="50%" cy="45%" r="60%"><stop offset="0" stop-color="#b9b9b9"/><stop offset="0.7" stop-color="#8a8a8a"/><stop offset="1" stop-color="#5c5c5c"/></radialGradient></defs><circle cx="15.5" cy="15.5" r="15" fill="url(#av)" stroke="#dadada" stroke-width="1.2"/><path d="M5 10c2-1 4 0 6-2M19 6c2 1 4 3 5 5M4 17c3 0 4 2 7 1M16 13c2 1 3 3 6 2M8 23c3 2 6 3 10 1" stroke="#e6e6e6" stroke-width="2" fill="none" stroke-linecap="round"/><path d="M9 13c2-1 3 1 5 0M17 19c2 0 4 1 6-1M11 6c1 1 3 1 4 0M20 24c1-1 2-2 4-2" stroke="#3c3c3c" stroke-width="1.8" fill="none" stroke-linecap="round"/><rect x="18" y="8" width="5" height="9" rx="1" fill="#474747"/></svg>
<div class="t" style="left:689.50px;top:252.16px;font-size:24.50px;line-height:24.50px;color:#1f2328;-webkit-text-stroke:0.60px #1f2328;transform:scaleX(0.9543);">Paebbels</div>
<div class="t" style="left:795.70px;top:252.16px;font-size:24.50px;line-height:24.50px;color:#1f2328;transform:scaleX(0.9741);">pushed</div>
<svg class="s" style="left:890.00px;top:252.10px;" width="24.50" height="24.50" viewBox="0 0 16 16"><path fill="#1f2328" d="M11.93 8.5a4.002 4.002 0 0 1-7.86 0H.75a.75.75 0 0 1 0-1.5h3.32a4.002 4.002 0 0 1 7.86 0h3.32a.75.75 0 0 1 0 1.5Zm-1.43-.75a2.5 2.5 0 1 0-5 0 2.5 2.5 0 0 0 5 0Z"/></svg>
<div class="t" style="left:922.00px;top:253.88px;font-size:22.00px;line-height:22.00px;color:#1f2328;transform:scaleX(0.9393);">d0f07e1</div>
<div class="r" style="left:1005.00px;top:248.60px;width:54.50px;height:30.00px;background:#ddf4ff;border-radius:8px;"></div>
<div class="t" style="left:1015.70px;top:254.17px;font-size:20.00px;line-height:20.00px;color:#3a6fd8;font-family:'Liberation Mono',monospace;transform:scaleX(0.9249);">dev</div>
<div class="t" style="left:1158.60px;top:208.22px;font-size:21.00px;line-height:21.00px;color:#59636e;transform:scaleX(0.9356);">Status</div>
<div class="t" style="left:1158.60px;top:249.60px;font-size:28.00px;line-height:28.00px;color:#1f2328;-webkit-text-stroke:0.69px #1f2328;transform:scaleX(0.9091);">Success</div>
<div class="t" style="left:1382.90px;top:208.22px;font-size:21.00px;line-height:21.00px;color:#59636e;transform:scaleX(1.0120);">Total duration</div>
<div class="t" style="left:1382.90px;top:249.60px;font-size:28.00px;line-height:28.00px;color:#1f2328;-webkit-text-stroke:0.69px #1f2328;transform:scaleX(0.9431);">5m 14s</div>
<div class="t" style="left:1608.60px;top:208.22px;font-size:21.00px;line-height:21.00px;color:#59636e;">Artifacts</div>
<div class="r" style="left:1608.60px;top:262.50px;width:15.20px;height:2.80px;background:#1f2328;"></div>
<div class="r" style="left:618.00px;top:349.50px;width:4028.50px;height:834.00px;background:#f6f8fa;border:1px solid #d1d9e0;border-radius:10px;"></div>
<div class="t" style="left:653.80px;top:394.90px;font-size:28.00px;line-height:28.00px;color:#1f2328;-webkit-text-stroke:0.69px #1f2328;transform:scaleX(0.9769);">_Checking_SimplePackage_Pipeline.yml</div>
<div class="t" style="left:653.80px;top:435.02px;font-size:21.00px;line-height:21.00px;color:#59636e;transform:scaleX(0.9868);">on: push</div>
<svg class="s" style="left:0.00px;top:0.00px;" width="4673.00" height="2738.00" viewBox="0 0 4673 2738"><g fill="none" stroke="#d3d8e0" stroke-width="3.3"><path d="M1169.4 584.8H1268.6"/><path d="M1169.4 584.8H1186.6A32 32 0 0 1 1218.6 616.8V973.0A32 32 0 0 0 1250.6 1005.0H1296.7"/><path d="M1169.4 762.0H1186.6A32 32 0 0 0 1218.6 730.0V616.8A32 32 0 0 1 1250.6 584.8H1268.6"/><path d="M1169.4 762.0H1186.6A32 32 0 0 1 1218.6 794.0V796.3A32 32 0 0 0 1250.6 828.3H1296.7"/><path d="M1169.4 762.0H1186.6A32 32 0 0 1 1218.6 794.0V973.0A32 32 0 0 0 1250.6 1005.0H1296.7"/><path d="M1169.4 762.0H1877.6"/><path d="M1778.4 584.8H1877.6"/><path d="M1778.4 584.8H1795.6A32 32 0 0 1 1827.6 616.8V730.0A32 32 0 0 0 1859.6 762.0H1877.6"/><path d="M1778.4 584.8H1795.6A32 32 0 0 1 1827.6 616.8V906.5A32 32 0 0 0 1859.6 938.5H1877.6"/><path d="M2331.4 584.8H2431.0"/><path d="M2331.4 762.0H2349.0A32 32 0 0 0 2381.0 730.0V616.8A32 32 0 0 1 2413.0 584.8H2431.0"/><path d="M2331.4 762.0H3039.5"/><path d="M2940.5 584.8H3039.5"/><path d="M2940.5 584.8H2958.1A32 32 0 0 1 2990.1 616.8V730.0A32 32 0 0 0 3022.1 762.0H3039.5"/><path d="M1750.5 828.3H2958.1A32 32 0 0 0 2990.1 796.3V616.8A32 32 0 0 1 3022.1 584.8H3039.5"/><path d="M1750.5 828.3H3512.2A32 32 0 0 0 3544.2 796.3V794.0A32 32 0 0 1 3576.2 762.0H3593.8"/><path d="M3494.3 584.8H3593.8"/><path d="M3494.3 584.8H3512.2A32 32 0 0 1 3544.2 616.8V730.0A32 32 0 0 0 3576.2 762.0H3593.8"/><path d="M3494.3 762.0H3593.8"/><path d="M2331.4 938.5H3512.2A32 32 0 0 0 3544.2 906.5V616.8A32 32 0 0 1 3576.2 584.8H3593.8"/><path d="M2331.4 938.5H3512.2A32 32 0 0 0 3544.2 906.5V794.0A32 32 0 0 1 3576.2 762.0H3593.8"/><path d="M4047.7 584.8H4146.6"/></g></svg>
<div class="r" style="left:715.30px;top:545.30px;width:454.20px;height:78.00px;background:#fff;border:1px solid #d1d9e0;border-radius:10px;"></div>
<svg class="s" style="left:737.20px;top:570.80px;" width="28.00" height="28.00" viewBox="0 0 16 16"><path fill="#4b8139" d="M8 16A8 8 0 1 1 8 0a8 8 0 0 1 0 16Zm3.78-9.72a.749.749 0 0 0-.326-1.275.749.749 0 0 0-.734.215L6.75 9.19 5.28 7.72a.751.751 0 0 0-1.042.018.751.751 0 0 0-.018 1.042l2 2a.75.75 0 0 0 1.06 0Z"/></svg>
<div class="t" style="left:780.00px;top:572.96px;font-size:24.50px;line-height:24.50px;color:#1f2328;-webkit-text-stroke:0.60px #1f2328;transform:scaleX(0.9323);">S…/ … /</div>
<svg class="s" style="left:876.60px;top:572.80px;" width="26.00" height="26.00" viewBox="0 0 20 20"><path d="M3.2 1.6 L5.9 1.2 L15.6 11.4 L12.2 14.6 L2.6 4.6 Z" fill="#24292f"/><path d="M12.2 14.6 L15.6 11.4 L17.2 16.8 Z" fill="#3b3f46"/><circle cx="17" cy="16.6" r="0.9" fill="#24292f"/></svg>
<div class="t" style="left:906.20px;top:572.96px;font-size:24.50px;line-height:24.50px;color:#1f2328;-webkit-text-stroke:0.60px #1f2328;transform:scaleX(0.9907);">Generate pipelin…</div>
<div class="t" style="left:1128.00px;top:573.48px;font-size:22.00px;line-height:22.00px;color:#59636e;transform:scaleX(0.8435);">0s</div>
<svg class="s" style="left:1155.20px;top:570.50px;" width="28.60" height="28.60" viewBox="0 0 28.6 28.6"><circle cx="14.3" cy="14.3" r="13.3" fill="#fff" stroke="#d1d9e0" stroke-width="1"/></svg>
<div class="r" style="left:1154.70px;top:570.00px;width:14.80px;height:29.60px;background:#fff;"></div>
<div class="r" style="left:1162.50px;top:577.80px;width:14.00px;height:14.00px;background:#59636e;border-radius:14px;"></div>
<div class="r" style="left:715.30px;top:722.50px;width:454.20px;height:78.00px;background:#fff;border:1px solid #d1d9e0;border-radius:10px;"></div>
<svg class="s" style="left:737.20px;top:748.00px;" width="28.00" height="28.00" viewBox="0 0 16 16"><path fill="#4b8139" d="M8 16A8 8 0 1 1 8 0a8 8 0 0 1 0 16Zm3.78-9.72a.749.749 0 0 0-.326-1.275.749.749 0 0 0-.734.215L6.75 9.19 5.28 7.72a.751.751 0 0 0-1.042.018.751.751 0 0 0-.018 1.042l2 2a.75.75 0 0 0 1.06 0Z"/></svg>
<div class="t" style="left:780.00px;top:750.16px;font-size:24.50px;line-height:24.50px;color:#1f2328;-webkit-text-stroke:0.60px #1f2328;transform:scaleX(0.9323);">S…/ … /</div>
<svg class="s" style="left:879.60px;top:750.00px;" width="26.00" height="26.00" viewBox="0 0 20 20"><rect x="2" y="0.5" width="16" height="17" rx="1.6" fill="#4e3566"/><rect x="3.3" y="0.8" width="1.2" height="16.4" fill="#6d5985"/><rect x="15.2" y="0.8" width="2.2" height="16.5" fill="#553b78"/><rect x="7.4" y="3.2" width="5.2" height="3" rx="0.6" fill="#fff"/><path d="M2 17.2h15.5v1.8H3a1 1 0 0 1-1-1Z" fill="#d2d2d2"/><path d="M2 16.5v2.2a1.2 1.2 0 0 0 1.2 1.2H17.5v-0.8H3.2a0.6 0.6 0 0 1 0-1.2" fill="#7a5fa0"/></svg>
<div class="t" style="left:915.20px;top:750.16px;font-size:24.50px;line-height:24.50px;color:#1f2328;-webkit-text-stroke:0.60px #1f2328;">Extract configur…</div>
<div class="t" style="left:1127.60px;top:750.68px;font-size:22.00px;line-height:22.00px;color:#59636e;transform:scaleX(0.8607);">4s</div>
<svg class="s" style="left:1155.20px;top:747.70px;" width="28.60" height="28.60" viewBox="0 0 28.6 28.6"><circle cx="14.3" cy="14.3" r="13.3" fill="#fff" stroke="#d1d9e0" stroke-width="1"/></svg>
<div class="r" style="left:1154.70px;top:747.20px;width:14.80px;height:29.60px;background:#fff;"></div>
<div class="r" style="left:1162.50px;top:755.00px;width:14.00px;height:14.00px;background:#59636e;border-radius:14px;"></div>
<div class="r" style="left:715.30px;top:898.80px;width:454.20px;height:78.00px;background:#fff;border:1px solid #d1d9e0;border-radius:10px;"></div>
<svg class="s" style="left:737.20px;top:924.30px;" width="28.00" height="28.00" viewBox="0 0 16 16"><path fill="#4b8139" d="M8 16A8 8 0 1 1 8 0a8 8 0 0 1 0 16Zm3.78-9.72a.749.749 0 0 0-.326-1.275.749.749 0 0 0-.734.215L6.75 9.19 5.28 7.72a.751.751 0 0 0-1.042.018.751.751 0 0 0-.018 1.042l2 2a.75.75 0 0 0 1.06 0Z"/></svg>
<div class="t" style="left:780.00px;top:926.46px;font-size:24.50px;line-height:24.50px;color:#1f2328;-webkit-text-stroke:0.60px #1f2328;transform:scaleX(0.9323);">S…/ … /</div>
<svg class="s" style="left:876.60px;top:926.30px;" width="26.00" height="26.00" viewBox="0 0 20 20"><path d="M3.2 1.6 L5.9 1.2 L15.6 11.4 L12.2 14.6 L2.6 4.6 Z" fill="#24292f"/><path d="M12.2 14.6 L15.6 11.4 L17.2 16.8 Z" fill="#3b3f46"/><circle cx="17" cy="16.6" r="0.9" fill="#24292f"/></svg>
<div class="t" style="left:906.20px;top:926.46px;font-size:24.50px;line-height:24.50px;color:#1f2328;-webkit-text-stroke:0.60px #1f2328;transform:scaleX(0.9907);">Generate pipelin…</div>
<div class="t" style="left:1128.00px;top:926.98px;font-size:22.00px;line-height:22.00px;color:#59636e;transform:scaleX(0.8435);">0s</div>
<svg class="s" style="left:1266px;top:479px" width="516" height="214" viewBox="1266 479 516 214"><path d="M1268.5 517V492a11 11 0 0 1 11-11H1645a11 11 0 0 1 11 11V505a12 12 0 0 0 12 12H1767.5a11 11 0 0 1 11 11V679a11 11 0 0 1-11 11H1279.5a11 11 0 0 1-11-11Z" fill="#fff" stroke="#d1d9e0" stroke-width="1"/></svg>
<div class="t" style="left:1296.30px;top:499.82px;font-size:21.00px;line-height:21.00px;color:#1f2328;-webkit-text-stroke:0.51px #1f2328;">Matrix: SimplePackage / UnitTest…</div>
<svg class="s" style="left:1318.00px;top:570.80px;" width="28.00" height="28.00" viewBox="0 0 16 16"><path fill="#4b8139" d="M8 16A8 8 0 1 1 8 0a8 8 0 0 1 0 16Zm3.78-9.72a.749.749 0 0 0-.326-1.275.749.749 0 0 0-.734.215L6.75 9.19 5.28 7.72a.751.751 0 0 0-1.042.018.751.751 0 0 0-.018 1.042l2 2a.75.75 0 0 0 1.06 0Z"/></svg>
<div class="t" style="left:1360.50px;top:572.96px;font-size:24.50px;line-height:24.50px;color:#1f2328;-webkit-text-stroke:0.60px #1f2328;transform:scaleX(1.0294);">22 jobs completed</div>
<div class="t" style="left:1318.60px;top:621.52px;font-size:21.60px;line-height:21.60px;color:#59636e;transform:scaleX(0.9460);">Show all jobs</div>
<svg class="s" style="left:1254.30px;top:570.50px;" width="28.60" height="28.60" viewBox="0 0 28.6 28.6"><circle cx="14.3" cy="14.3" r="13.3" fill="#fff" stroke="#d1d9e0" stroke-width="1"/></svg>
<div class="r" style="left:1268.60px;top:570.00px;width:14.80px;height:29.60px;background:#fff;"></div>
<div class="r" style="left:1261.60px;top:577.80px;width:14.00px;height:14.00px;background:#59636e;border-radius:14px;"></div>
<svg class="s" style="left:1764.10px;top:570.50px;" width="28.60" height="28.60" viewBox="0 0 28.6 28.6"><circle cx="14.3" cy="14.3" r="13.3" fill="#fff" stroke="#d1d9e0" stroke-width="1"/></svg>
<div class="r" style="left:1763.60px;top:570.00px;width:14.80px;height:29.60px;background:#fff;"></div>
<div class="r" style="left:1771.40px;top:577.80px;width:14.00px;height:14.00px;background:#59636e;border-radius:14px;"></div>
<div class="r" style="left:1296.70px;top:788.80px;width:454.20px;height:78.00px;background:#fff;border:1px solid #d1d9e0;border-radius:10px;"></div>
<svg class="s" style="left:1318.60px;top:814.30px;" width="28.00" height="28.00" viewBox="0 0 16 16"><path fill="#4b8139" d="M8 16A8 8 0 1 1 8 0a8 8 0 0 1 0 16Zm3.78-9.72a.749.749 0 0 0-.326-1.275.749.749 0 0 0-.734.215L6.75 9.19 5.28 7.72a.751.751 0 0 0-1.042.018.751.751 0 0 0-.018 1.042l2 2a.75.75 0 0 0 1.06 0Z"/></svg>
<div class="t" style="left:1361.40px;top:816.46px;font-size:24.50px;line-height:24.50px;color:#1f2328;-webkit-text-stroke:0.60px #1f2328;transform:scaleX(0.9323);">S…/ … /</div>
<svg class="s" style="left:1458.00px;top:816.30px;" width="26.00" height="26.00" viewBox="0 0 20 20"><ellipse cx="5.9" cy="10.2" rx="5.5" ry="8.2" fill="#fff" stroke="#a0a0a0" stroke-width="0.7"/><ellipse cx="14.1" cy="10.2" rx="5.5" ry="8.2" fill="#f2f2f2" stroke="#a0a0a0" stroke-width="0.7"/><ellipse cx="4.4" cy="10.4" rx="2.1" ry="3.6" fill="#2e1f4d"/><ellipse cx="12.6" cy="10.4" rx="2.1" ry="3.6" fill="#2e1f4d"/><circle cx="4.0" cy="8.4" r="0.7" fill="#fff"/><circle cx="12.2" cy="8.4" r="0.7" fill="#fff"/></svg>
<div class="t" style="left:1495.60px;top:816.46px;font-size:24.50px;line-height:24.50px;color:#1f2328;-webkit-text-stroke:0.60px #1f2328;transform:scaleX(0.9544);">Check Static Ty…</div>
<div class="t" style="left:1699.00px;top:816.98px;font-size:22.00px;line-height:22.00px;color:#59636e;transform:scaleX(0.8457);">17s</div>
<svg class="s" style="left:1282.40px;top:814.00px;" width="28.60" height="28.60" viewBox="0 0 28.6 28.6"><circle cx="14.3" cy="14.3" r="13.3" fill="#fff" stroke="#d1d9e0" stroke-width="1"/></svg>
<div class="r" style="left:1296.70px;top:813.50px;width:14.80px;height:29.60px;background:#fff;"></div>
<div class="r" style="left:1289.70px;top:821.30px;width:14.00px;height:14.00px;background:#59636e;border-radius:14px;"></div>
<svg class="s" style="left:1736.60px;top:814.00px;" width="28.60" height="28.60" viewBox="0 0 28.6 28.6"><circle cx="14.3" cy="14.3" r="13.3" fill="#fff" stroke="#d1d9e0" stroke-width="1"/></svg>
<div class="r" style="left:1736.10px;top:813.50px;width:14.80px;height:29.60px;background:#fff;"></div>
<div class="r" style="left:1743.90px;top:821.30px;width:14.00px;height:14.00px;background:#59636e;border-radius:14px;"></div>
<div class="r" style="left:1296.70px;top:965.50px;width:454.20px;height:78.00px;background:#fff;border:1px solid #d1d9e0;border-radius:10px;"></div>
<svg class="s" style="left:1318.60px;top:991.00px;" width="28.00" height="28.00" viewBox="0 0 16 16"><path fill="#4b8139" d="M8 16A8 8 0 1 1 8 0a8 8 0 0 1 0 16Zm3.78-9.72a.749.749 0 0 0-.326-1.275.749.749 0 0 0-.734.215L6.75 9.19 5.28 7.72a.751.751 0 0 0-1.042.018.751.751 0 0 0-.018 1.042l2 2a.75.75 0 0 0 1.06 0Z"/></svg>
<div class="t" style="left:1361.40px;top:993.16px;font-size:24.50px;line-height:24.50px;color:#1f2328;-webkit-text-stroke:0.60px #1f2328;transform:scaleX(0.9323);">S…/ … /</div>
<svg class="s" style="left:1458.00px;top:993.00px;" width="26.00" height="26.00" viewBox="0 0 20 20"><ellipse cx="5.9" cy="10.2" rx="5.5" ry="8.2" fill="#fff" stroke="#a0a0a0" stroke-width="0.7"/><ellipse cx="14.1" cy="10.2" rx="5.5" ry="8.2" fill="#f2f2f2" stroke="#a0a0a0" stroke-width="0.7"/><ellipse cx="4.4" cy="10.4" rx="2.1" ry="3.6" fill="#2e1f4d"/><ellipse cx="12.6" cy="10.4" rx="2.1" ry="3.6" fill="#2e1f4d"/><circle cx="4.0" cy="8.4" r="0.7" fill="#fff"/><circle cx="12.2" cy="8.4" r="0.7" fill="#fff"/></svg>
<div class="t" style="left:1495.60px;top:993.16px;font-size:24.50px;line-height:24.50px;color:#1f2328;-webkit-text-stroke:0.60px #1f2328;transform:scaleX(0.9738);">Check docume…</div>
<div class="t" style="left:1699.00px;top:993.68px;font-size:22.00px;line-height:22.00px;color:#59636e;transform:scaleX(0.8457);">18s</div>
<svg class="s" style="left:1282.40px;top:990.70px;" width="28.60" height="28.60" viewBox="0 0 28.6 28.6"><circle cx="14.3" cy="14.3" r="13.3" fill="#fff" stroke="#d1d9e0" stroke-width="1"/></svg>
<div class="r" style="left:1296.70px;top:990.20px;width:14.80px;height:29.60px;background:#fff;"></div>
<div class="r" style="left:1289.70px;top:998.00px;width:14.00px;height:14.00px;background:#59636e;border-radius:14px;"></div>
<div class="r" style="left:1877.60px;top:545.30px;width:454.20px;height:78.00px;background:#fff;border:1px solid #d1d9e0;border-radius:10px;"></div>
<svg class="s" style="left:1899.50px;top:570.80px;" width="28.00" height="28.00" viewBox="0 0 16 16"><path fill="#4b8139" d="M8 16A8 8 0 1 1 8 0a8 8 0 0 1 0 16Zm3.78-9.72a.749.749 0 0 0-.326-1.275.749.749 0 0 0-.734.215L6.75 9.19 5.28 7.72a.751.751 0 0 0-1.042.018.751.751 0 0 0-.018 1.042l2 2a.75.75 0 0 0 1.06 0Z"/></svg>
<div class="t" style="left:1942.30px;top:572.96px;font-size:24.50px;line-height:24.50px;color:#1f2328;-webkit-text-stroke:0.60px #1f2328;transform:scaleX(0.9323);">S…/ … /</div>
<svg class="s" style="left:2038.90px;top:572.80px;" width="26.00" height="26.00" viewBox="0 0 20 20"><rect x="1" y="1" width="18" height="18" rx="2" fill="#e4e0f0"/><path d="M1 7h18M1 13h18M7 1v18M13 1v18" stroke="#cfc8e2" stroke-width="0.6"/><rect x="2.6" y="6" width="3.6" height="12" fill="#6bd06a"/><rect x="8.2" y="10" width="3.6" height="8" fill="#e12c7c"/><rect x="13.8" y="3" width="3.6" height="15" fill="#5aa6ee"/></svg>
<div class="t" style="left:2076.50px;top:572.96px;font-size:24.50px;line-height:24.50px;color:#1f2328;-webkit-text-stroke:0.60px #1f2328;transform:scaleX(0.9577);">Publish Code C…</div>
<div class="t" style="left:2279.50px;top:573.48px;font-size:22.00px;line-height:22.00px;color:#59636e;transform:scaleX(0.8570);">20s</div>
<svg class="s" style="left:1863.30px;top:570.50px;" width="28.60" height="28.60" viewBox="0 0 28.6 28.6"><circle cx="14.3" cy="14.3" r="13.3" fill="#fff" stroke="#d1d9e0" stroke-width="1"/></svg>
<div class="r" style="left:1877.60px;top:570.00px;width:14.80px;height:29.60px;background:#fff;"></div>
<div class="r" style="left:1870.60px;top:577.80px;width:14.00px;height:14.00px;background:#59636e;border-radius:14px;"></div>
<svg class="s" style="left:2317.50px;top:570.50px;" width="28.60" height="28.60" viewBox="0 0 28.6 28.6"><circle cx="14.3" cy="14.3" r="13.3" fill="#fff" stroke="#d1d9e0" stroke-width="1"/></svg>
<div class="r" style="left:2317.00px;top:570.00px;width:14.80px;height:29.60px;background:#fff;"></div>
<div class="r" style="left:2324.80px;top:577.80px;width:14.00px;height:14.00px;background:#59636e;border-radius:14px;"></div>
<div class="r" style="left:1877.60px;top:722.50px;width:454.20px;height:78.00px;background:#fff;border:1px solid #d1d9e0;border-radius:10px;"></div>
<svg class="s" style="left:1899.50px;top:748.00px;" width="28.00" height="28.00" viewBox="0 0 16 16"><path fill="#4b8139" d="M8 16A8 8 0 1 1 8 0a8 8 0 0 1 0 16Zm3.78-9.72a.749.749 0 0 0-.326-1.275.749.749 0 0 0-.734.215L6.75 9.19 5.28 7.72a.751.751 0 0 0-1.042.018.751.751 0 0 0-.018 1.042l2 2a.75.75 0 0 0 1.06 0Z"/></svg>
<div class="t" style="left:1942.30px;top:750.16px;font-size:24.50px;line-height:24.50px;color:#1f2328;-webkit-text-stroke:0.60px #1f2328;transform:scaleX(0.9323);">S…/ … /</div>
<svg class="s" style="left:2038.90px;top:750.00px;" width="26.00" height="26.00" viewBox="0 0 20 20"><rect x="1" y="1" width="18" height="18" rx="2" fill="#e4e0f0"/><path d="M1 7h18M1 13h18M7 1v18M13 1v18" stroke="#cfc8e2" stroke-width="0.6"/><rect x="2.6" y="6" width="3.6" height="12" fill="#6bd06a"/><rect x="8.2" y="10" width="3.6" height="8" fill="#e12c7c"/><rect x="13.8" y="3" width="3.6" height="15" fill="#5aa6ee"/></svg>
<div class="t" style="left:2076.50px;top:750.16px;font-size:24.50px;line-height:24.50px;color:#1f2328;-webkit-text-stroke:0.60px #1f2328;transform:scaleX(0.9548);">Publish Test Re…</div>
<div class="t" style="left:2279.50px;top:750.68px;font-size:22.00px;line-height:22.00px;color:#59636e;transform:scaleX(0.8570);">13s</div>
<svg class="s" style="left:1863.30px;top:747.70px;" width="28.60" height="28.60" viewBox="0 0 28.6 28.6"><circle cx="14.3" cy="14.3" r="13.3" fill="#fff" stroke="#d1d9e0" stroke-width="1"/></svg>
<div class="r" style="left:1877.60px;top:747.20px;width:14.80px;height:29.60px;background:#fff;"></div>
<div class="r" style="left:1870.60px;top:755.00px;width:14.00px;height:14.00px;background:#59636e;border-radius:14px;"></div>
<svg class="s" style="left:2317.50px;top:747.70px;" width="28.60" height="28.60" viewBox="0 0 28.6 28.6"><circle cx="14.3" cy="14.3" r="13.3" fill="#fff" stroke="#d1d9e0" stroke-width="1"/></svg>
<div class="r" style="left:2317.00px;top:747.20px;width:14.80px;height:29.60px;background:#fff;"></div>
<div class="r" style="left:2324.80px;top:755.00px;width:14.00px;height:14.00px;background:#59636e;border-radius:14px;"></div>
<div class="r" style="left:1877.60px;top:899.00px;width:454.20px;height:78.00px;background:#fff;border:1px solid #d1d9e0;border-radius:10px;"></div>
<svg class="s" style="left:1899.50px;top:924.50px;" width="28.00" height="28.00" viewBox="0 0 16 16"><path fill="#4b8139" d="M8 16A8 8 0 1 1 8 0a8 8 0 0 1 0 16Zm3.78-9.72a.749.749 0 0 0-.326-1.275.749.749 0 0 0-.734.215L6.75 9.19 5.28 7.72a.751.751 0 0 0-1.042.018.751.751 0 0 0-.018 1.042l2 2a.75.75 0 0 0 1.06 0Z"/></svg>
<div class="t" style="left:1942.30px;top:926.66px;font-size:24.50px;line-height:24.50px;color:#1f2328;-webkit-text-stroke:0.60px #1f2328;transform:scaleX(0.9323);">S…/ … /</div>
<svg class="s" style="left:2038.90px;top:926.50px;" width="26.00" height="26.00" viewBox="0 0 20 20"><path d="M10 1.5 18 5.5v9L10 18.8 2 14.5v-9Z" fill="#e9c46a"/><path d="M10 10.2 18 5.5v9L10 18.8Z" fill="#d9a441"/><path d="M2 5.5 10 1.5l8 4-8 4.7Z" fill="#f3d38a"/><path d="M5.6 3.6 13.8 7.6v2.6l-1.8 1v-2.6L4 4.4Z" fill="#8f5a2e"/></svg>
<div class="t" style="left:2076.50px;top:926.66px;font-size:24.50px;line-height:24.50px;color:#1f2328;-webkit-text-stroke:0.60px #1f2328;transform:scaleX(0.9509);">Package in Sou…</div>
<div class="t" style="left:2279.50px;top:927.18px;font-size:22.00px;line-height:22.00px;color:#59636e;transform:scaleX(0.8570);">18s</div>
<svg class="s" style="left:1863.30px;top:924.20px;" width="28.60" height="28.60" viewBox="0 0 28.6 28.6"><circle cx="14.3" cy="14.3" r="13.3" fill="#fff" stroke="#d1d9e0" stroke-width="1"/></svg>
<div class="r" style="left:1877.60px;top:923.70px;width:14.80px;height:29.60px;background:#fff;"></div>
<div class="r" style="left:1870.60px;top:931.50px;width:14.00px;height:14.00px;background:#59636e;border-radius:14px;"></div>
<svg class="s" style="left:2317.50px;top:924.20px;" width="28.60" height="28.60" viewBox="0 0 28.6 28.6"><circle cx="14.3" cy="14.3" r="13.3" fill="#fff" stroke="#d1d9e0" stroke-width="1"/></svg>
<div class="r" style="left:2317.00px;top:923.70px;width:14.80px;height:29.60px;background:#fff;"></div>
<div class="r" style="left:2324.80px;top:931.50px;width:14.00px;height:14.00px;background:#59636e;border-radius:14px;"></div>
<div class="r" style="left:2431.00px;top:517.00px;width:509.50px;height:210.60px;background:#fff;border:1px solid #d1d9e0;border-radius:10px;"></div>
<svg class="s" style="left:2479.80px;top:570.80px;" width="28.00" height="28.00" viewBox="0 0 16 16"><path fill="#4b8139" d="M8 16A8 8 0 1 1 8 0a8 8 0 0 1 0 16Zm3.78-9.72a.749.749 0 0 0-.326-1.275.749.749 0 0 0-.734.215L6.75 9.19 5.28 7.72a.751.751 0 0 0-1.042.018.751.751 0 0 0-.018 1.042l2 2a.75.75 0 0 0 1.06 0Z"/></svg>
<div class="t" style="left:2522.00px;top:572.96px;font-size:24.50px;line-height:24.50px;color:#1f2328;-webkit-text-stroke:0.60px #1f2328;transform:scaleX(0.9290);">S…/ … /</div>
<svg class="s" style="left:2620.50px;top:572.80px;" width="26.00" height="26.00" viewBox="0 0 20 20"><rect x="2" y="0.5" width="16" height="17" rx="1.6" fill="#4e3566"/><rect x="3.3" y="0.8" width="1.2" height="16.4" fill="#6d5985"/><rect x="15.2" y="0.8" width="2.2" height="16.5" fill="#553b78"/><rect x="7.4" y="3.2" width="5.2" height="3" rx="0.6" fill="#fff"/><path d="M2 17.2h15.5v1.8H3a1 1 0 0 1-1-1Z" fill="#d2d2d2"/><path d="M2 16.5v2.2a1.2 1.2 0 0 0 1.2 1.2H17.5v-0.8H3.2a0.6 0.6 0 0 1 0-1.2" fill="#7a5fa0"/></svg>
<div class="t" style="left:2658.00px;top:572.96px;font-size:24.50px;line-height:24.50px;color:#1f2328;-webkit-text-stroke:0.60px #1f2328;transform:scaleX(0.9818);">HTML Docume…</div>
<div class="t" style="left:2860.00px;top:573.48px;font-size:22.00px;line-height:22.00px;color:#59636e;transform:scaleX(0.8598);">55s</div>
<svg class="s" style="left:2479.80px;top:648.90px;" width="28.00" height="28.00" viewBox="0 0 16 16"><path fill="#4b8139" d="M8 16A8 8 0 1 1 8 0a8 8 0 0 1 0 16Zm3.78-9.72a.749.749 0 0 0-.326-1.275.749.749 0 0 0-.734.215L6.75 9.19 5.28 7.72a.751.751 0 0 0-1.042.018.751.751 0 0 0-.018 1.042l2 2a.75.75 0 0 0 1.06 0Z"/></svg>
<div class="t" style="left:2522.00px;top:651.06px;font-size:24.50px;line-height:24.50px;color:#1f2328;-webkit-text-stroke:0.60px #1f2328;transform:scaleX(0.9290);">S…/ … /</div>
<svg class="s" style="left:2620.50px;top:650.90px;" width="26.00" height="26.00" viewBox="0 0 20 20"><rect x="2" y="0.5" width="16" height="17" rx="1.6" fill="#4e3566"/><rect x="3.3" y="0.8" width="1.2" height="16.4" fill="#6d5985"/><rect x="15.2" y="0.8" width="2.2" height="16.5" fill="#553b78"/><rect x="7.4" y="3.2" width="5.2" height="3" rx="0.6" fill="#fff"/><path d="M2 17.2h15.5v1.8H3a1 1 0 0 1-1-1Z" fill="#d2d2d2"/><path d="M2 16.5v2.2a1.2 1.2 0 0 0 1.2 1.2H17.5v-0.8H3.2a0.6 0.6 0 0 1 0-1.2" fill="#7a5fa0"/></svg>
<div class="t" style="left:2658.00px;top:651.06px;font-size:24.50px;line-height:24.50px;color:#1f2328;-webkit-text-stroke:0.60px #1f2328;transform:scaleX(0.9505);">LaTeX Docume…</div>
<div class="t" style="left:2860.00px;top:651.58px;font-size:22.00px;line-height:22.00px;color:#59636e;transform:scaleX(0.8598);">51s</div>
<svg class="s" style="left:2416.70px;top:570.50px;" width="28.60" height="28.60" viewBox="0 0 28.6 28.6"><circle cx="14.3" cy="14.3" r="13.3" fill="#fff" stroke="#d1d9e0" stroke-width="1"/></svg>
<div class="r" style="left:2431.00px;top:570.00px;width:14.80px;height:29.60px;background:#fff;"></div>
<div class="r" style="left:2424.00px;top:577.80px;width:14.00px;height:14.00px;background:#59636e;border-radius:14px;"></div>
<svg class="s" style="left:2926.20px;top:570.50px;" width="28.60" height="28.60" viewBox="0 0 28.6 28.6"><circle cx="14.3" cy="14.3" r="13.3" fill="#fff" stroke="#d1d9e0" stroke-width="1"/></svg>
<div class="r" style="left:2925.70px;top:570.00px;width:14.80px;height:29.60px;background:#fff;"></div>
<div class="r" style="left:2933.50px;top:577.80px;width:14.00px;height:14.00px;background:#59636e;border-radius:14px;"></div>
<div class="r" style="left:3039.50px;top:545.30px;width:454.20px;height:78.00px;background:#fff;border:1px solid #d1d9e0;border-radius:10px;"></div>
<svg class="s" style="left:3061.40px;top:570.80px;" width="28.00" height="28.00" viewBox="0 0 16 16"><path fill="#4b8139" d="M8 16A8 8 0 1 1 8 0a8 8 0 0 1 0 16Zm3.78-9.72a.749.749 0 0 0-.326-1.275.749.749 0 0 0-.734.215L6.75 9.19 5.28 7.72a.751.751 0 0 0-1.042.018.751.751 0 0 0-.018 1.042l2 2a.75.75 0 0 0 1.06 0Z"/></svg>
<div class="t" style="left:3104.20px;top:572.96px;font-size:24.50px;line-height:24.50px;color:#1f2328;-webkit-text-stroke:0.60px #1f2328;transform:scaleX(0.9323);">S…/ … /</div>
<svg class="s" style="left:3200.80px;top:572.80px;" width="26.00" height="26.00" viewBox="0 0 20 20"><rect x="10.3" y="6.5" width="9.6" height="12.8" rx="1" fill="#64a8ee"/><rect x="10.3" y="17.4" width="9.6" height="1.2" fill="#b9c6d6"/><rect x="4.9" y="3.3" width="10.5" height="12.8" rx="1" fill="#b01c45"/><rect x="4.9" y="14.4" width="10.5" height="1.1" fill="#9aa0a8"/><rect x="0.9" y="1.6" width="10.7" height="12.9" rx="0.8" fill="#a6d53a"/><rect x="0.9" y="1.6" width="1.2" height="12.9" fill="#6f9f1f"/><rect x="0.9" y="12.8" width="10.7" height="1.3" fill="#9aa8a0"/></svg>
<div class="t" style="left:3238.40px;top:572.96px;font-size:24.50px;line-height:24.50px;color:#1f2328;-webkit-text-stroke:0.60px #1f2328;transform:scaleX(0.9857);">Publish to GH-P…</div>
<div class="t" style="left:3452.40px;top:573.48px;font-size:22.00px;line-height:22.00px;color:#59636e;transform:scaleX(0.8349);">7s</div>
<svg class="s" style="left:3025.20px;top:570.50px;" width="28.60" height="28.60" viewBox="0 0 28.6 28.6"><circle cx="14.3" cy="14.3" r="13.3" fill="#fff" stroke="#d1d9e0" stroke-width="1"/></svg>
<div class="r" style="left:3039.50px;top:570.00px;width:14.80px;height:29.60px;background:#fff;"></div>
<div class="r" style="left:3032.50px;top:577.80px;width:14.00px;height:14.00px;background:#59636e;border-radius:14px;"></div>
<svg class="s" style="left:3479.40px;top:570.50px;" width="28.60" height="28.60" viewBox="0 0 28.6 28.6"><circle cx="14.3" cy="14.3" r="13.3" fill="#fff" stroke="#d1d9e0" stroke-width="1"/></svg>
<div class="r" style="left:3478.90px;top:570.00px;width:14.80px;height:29.60px;background:#fff;"></div>
<div class="r" style="left:3486.70px;top:577.80px;width:14.00px;height:14.00px;background:#59636e;border-radius:14px;"></div>
<div class="r" style="left:3039.50px;top:722.50px;width:454.20px;height:78.00px;background:#fff;border:1px solid #d1d9e0;border-radius:10px;"></div>
<svg class="s" style="left:3061.40px;top:748.00px;" width="28.00" height="28.00" viewBox="0 0 16 16"><path fill="#4b8139" d="M8 16A8 8 0 1 1 8 0a8 8 0 0 1 0 16Zm3.78-9.72a.749.749 0 0 0-.326-1.275.749.749 0 0 0-.734.215L6.75 9.19 5.28 7.72a.751.751 0 0 0-1.042.018.751.751 0 0 0-.018 1.042l2 2a.75.75 0 0 0 1.06 0Z"/></svg>
<div class="t" style="left:3104.20px;top:750.16px;font-size:24.50px;line-height:24.50px;color:#1f2328;-webkit-text-stroke:0.60px #1f2328;transform:scaleX(0.9323);">S…/ … /</div>
<svg class="s" style="left:3200.80px;top:750.00px;" width="26.00" height="26.00" viewBox="0 0 20 20"><path d="M2.2 3.6h15.6l-1.8 14.2H4Z" fill="#b9b9b9"/><path d="M5 5.6 7.6 8.6 5.4 11.6 7.8 14.6 5.8 17M10 5.6 12.4 8.6 10 11.6 12.4 14.6 10.6 17M10 5.6 7.6 8.6 10 11.6 7.6 14.6 9.4 17M15 5.6 12.4 8.6 14.6 11.6 12.2 14.6 14.2 17" stroke="#fff" stroke-width="1.05" fill="none"/><rect x="1.4" y="1.6" width="17.2" height="2.8" rx="1.2" fill="#a4a4a4"/><rect x="3.6" y="16.8" width="12.8" height="2.4" rx="1.1" fill="#a4a4a4"/></svg>
<div class="t" style="left:3238.40px;top:750.16px;font-size:24.50px;line-height:24.50px;color:#1f2328;-webkit-text-stroke:0.60px #1f2328;transform:scaleX(1.0214);">Intermediate A…</div>
<div class="t" style="left:3442.90px;top:750.68px;font-size:22.00px;line-height:22.00px;color:#59636e;transform:scaleX(0.8147);">16s</div>
<svg class="s" style="left:3025.20px;top:747.70px;" width="28.60" height="28.60" viewBox="0 0 28.6 28.6"><circle cx="14.3" cy="14.3" r="13.3" fill="#fff" stroke="#d1d9e0" stroke-width="1"/></svg>
<div class="r" style="left:3039.50px;top:747.20px;width:14.80px;height:29.60px;background:#fff;"></div>
<div class="r" style="left:3032.50px;top:755.00px;width:14.00px;height:14.00px;background:#59636e;border-radius:14px;"></div>
<svg class="s" style="left:3479.40px;top:747.70px;" width="28.60" height="28.60" viewBox="0 0 28.6 28.6"><circle cx="14.3" cy="14.3" r="13.3" fill="#fff" stroke="#d1d9e0" stroke-width="1"/></svg>
<div class="r" style="left:3478.90px;top:747.20px;width:14.80px;height:29.60px;background:#fff;"></div>
<div class="r" style="left:3486.70px;top:755.00px;width:14.00px;height:14.00px;background:#59636e;border-radius:14px;"></div>
<div class="r" style="left:3593.80px;top:545.30px;width:454.20px;height:78.00px;background:#fff;border:1px solid #d1d9e0;border-radius:10px;"></div>
<svg class="s" style="left:3615.70px;top:570.80px;" width="28.00" height="28.00" viewBox="0 0 16 16"><circle cx="8" cy="8" r="6.9" fill="none" stroke="#59636e" stroke-width="1.5"/></svg>
<div class="t" style="left:3658.50px;top:572.96px;font-size:24.50px;line-height:24.50px;color:#59636e;-webkit-text-stroke:0.60px #59636e;transform:scaleX(0.9323);">S…/ … /</div>
<svg class="s" style="left:3755.10px;top:572.80px;" width="26.00" height="26.00" viewBox="0 0 20 20"><path d="M3 1h9.5L17 5.5V19H3Z" fill="#f3f3f3" stroke="#c9c9c9" stroke-width="0.6"/><path d="M5.5 6h6M5.5 9h7M5.5 12h4" stroke="#b9b9c9" stroke-width="0.9"/><path d="M8 17.6l1-3.6 8.4-8.4 2.6 2.6-8.4 8.4Z" fill="#f4900c"/><path d="M17.4 5.6l1.2-1.2 2.6 2.6-1.2 1.2Z" fill="#e03a5c"/><path d="M8 17.6l1-3.6 2.6 2.6Z" fill="#ffd983"/></svg>
<div class="t" style="left:3792.70px;top:572.96px;font-size:24.50px;line-height:24.50px;color:#59636e;-webkit-text-stroke:0.60px #59636e;transform:scaleX(0.9323);">Create &#x27;Release Pa…</div>
<svg class="s" style="left:3579.50px;top:570.50px;" width="28.60" height="28.60" viewBox="0 0 28.6 28.6"><circle cx="14.3" cy="14.3" r="13.3" fill="#fff" stroke="#d1d9e0" stroke-width="1"/></svg>
<div class="r" style="left:3593.80px;top:570.00px;width:14.80px;height:29.60px;background:#fff;"></div>
<div class="r" style="left:3586.80px;top:577.80px;width:14.00px;height:14.00px;background:#59636e;border-radius:14px;"></div>
<svg class="s" style="left:4033.70px;top:570.50px;" width="28.60" height="28.60" viewBox="0 0 28.6 28.6"><circle cx="14.3" cy="14.3" r="13.3" fill="#fff" stroke="#d1d9e0" stroke-width="1"/></svg>
<div class="r" style="left:4033.20px;top:570.00px;width:14.80px;height:29.60px;background:#fff;"></div>
<div class="r" style="left:4041.00px;top:577.80px;width:14.00px;height:14.00px;background:#59636e;border-radius:14px;"></div>
<div class="r" style="left:3593.80px;top:722.50px;width:454.20px;height:78.00px;background:#fff;border:1px solid #d1d9e0;border-radius:10px;"></div>
<svg class="s" style="left:3615.70px;top:748.00px;" width="28.00" height="28.00" viewBox="0 0 16 16"><path fill="#4b8139" d="M8 16A8 8 0 1 1 8 0a8 8 0 0 1 0 16Zm3.78-9.72a.749.749 0 0 0-.326-1.275.749.749 0 0 0-.734.215L6.75 9.19 5.28 7.72a.751.751 0 0 0-1.042.018.751.751 0 0 0-.018 1.042l2 2a.75.75 0 0 0 1.06 0Z"/></svg>
<div class="t" style="left:3658.50px;top:750.16px;font-size:24.50px;line-height:24.50px;color:#1f2328;-webkit-text-stroke:0.60px #1f2328;transform:scaleX(0.9669);">Sim…/ … /</div>
<svg class="s" style="left:3781.10px;top:750.00px;" width="26.00" height="26.00" viewBox="0 0 20 20"><path d="M2.2 3.6h15.6l-1.8 14.2H4Z" fill="#b9b9b9"/><path d="M5 5.6 7.6 8.6 5.4 11.6 7.8 14.6 5.8 17M10 5.6 12.4 8.6 10 11.6 12.4 14.6 10.6 17M10 5.6 7.6 8.6 10 11.6 7.6 14.6 9.4 17M15 5.6 12.4 8.6 14.6 11.6 12.2 14.6 14.2 17" stroke="#fff" stroke-width="1.05" fill="none"/><rect x="1.4" y="1.6" width="17.2" height="2.8" rx="1.2" fill="#a4a4a4"/><rect x="3.6" y="16.8" width="12.8" height="2.4" rx="1.1" fill="#a4a4a4"/></svg>
<div class="t" style="left:3817.70px;top:750.16px;font-size:24.50px;line-height:24.50px;color:#1f2328;-webkit-text-stroke:0.60px #1f2328;transform:scaleX(1.0320);">Artifact Cleanup</div>
<div class="t" style="left:4005.70px;top:750.68px;font-size:22.00px;line-height:22.00px;color:#59636e;transform:scaleX(0.8780);">4s</div>
<svg class="s" style="left:3579.50px;top:747.70px;" width="28.60" height="28.60" viewBox="0 0 28.6 28.6"><circle cx="14.3" cy="14.3" r="13.3" fill="#fff" stroke="#d1d9e0" stroke-width="1"/></svg>
<div class="r" style="left:3593.80px;top:747.20px;width:14.80px;height:29.60px;background:#fff;"></div>
<div class="r" style="left:3586.80px;top:755.00px;width:14.00px;height:14.00px;background:#59636e;border-radius:14px;"></div>
<div class="r" style="left:4146.60px;top:545.30px;width:454.20px;height:78.00px;background:#fff;border:1px solid #d1d9e0;border-radius:10px;"></div>
<svg class="s" style="left:4168.50px;top:570.80px;" width="28.00" height="28.00" viewBox="0 0 16 16"><circle cx="8" cy="8" r="6.9" fill="none" stroke="#59636e" stroke-width="1.5"/></svg>
<div class="t" style="left:4211.30px;top:572.96px;font-size:24.50px;line-height:24.50px;color:#59636e;-webkit-text-stroke:0.60px #59636e;transform:scaleX(0.9733);">Simple… / … /</div>
<svg class="s" style="left:4375.90px;top:572.80px;" width="26.00" height="26.00" viewBox="0 0 20 20"><path d="M18.6 1.4c-4.2.2-8 2.4-10.6 6.2L5 7.4 2.2 10l3.6.8 3.4 3.4.8 3.6 2.6-2.8-.2-3c3.8-2.6 6-6.4 6.2-10.6Z" fill="#e0e4ea"/><path d="M18.6 1.4c-1.6.1-3.2.5-4.6 1.2l3.4 3.4c.7-1.4 1.1-3 1.2-4.6Z" fill="#c8203d"/><path d="M5 7.4 2.2 10l3.6.8 2-3.2Zm7.6 7.6-2.6 2.8-.8-3.6 3.2-2Z" fill="#c8203d"/><circle cx="12.6" cy="7.4" r="1.7" fill="#88c9f9" stroke="#8899a6" stroke-width="0.5"/><path d="M5.2 11.6c-1.6.4-2.8 1.6-3.4 4.6 3-.6 4.2-1.8 4.6-3.4Z" fill="#f4900c"/></svg>
<div class="t" style="left:4412.50px;top:572.96px;font-size:24.50px;line-height:24.50px;color:#59636e;-webkit-text-stroke:0.60px #59636e;">Publish to PyPI</div>
<svg class="s" style="left:4132.30px;top:570.50px;" width="28.60" height="28.60" viewBox="0 0 28.6 28.6"><circle cx="14.3" cy="14.3" r="13.3" fill="#fff" stroke="#d1d9e0" stroke-width="1"/></svg>
<div class="r" style="left:4146.60px;top:570.00px;width:14.80px;height:29.60px;background:#fff;"></div>
<div class="r" style="left:4139.60px;top:577.80px;width:14.00px;height:14.00px;background:#59636e;border-radius:14px;"></div>
<div class="r" style="left:4454.00px;top:1085.80px;width:48.40px;height:47.20px;background:#f6f8fa;border:1px solid #d1d9e0;border-radius:10px;"></div>
<svg class="s" style="left:4464.20px;top:1095.40px;" width="28.00" height="28.00" viewBox="0 0 16 16"><path fill="#59636e" d="M1.75 10a.75.75 0 0 1 .75.75v2.5c0 .138.112.25.25.25h2.5a.75.75 0 0 1 0 1.5h-2.5A1.75 1.75 0 0 1 1 13.25v-2.5a.75.75 0 0 1 .75-.75Zm12.5 0a.75.75 0 0 1 .75.75v2.5A1.75 1.75 0 0 1 13.25 15h-2.5a.75.75 0 0 1 0-1.5h2.5a.25.25 0 0 0 .25-.25v-2.5a.75.75 0 0 1 .75-.75ZM2.75 2.5a.25.25 0 0 0-.25.25v2.5a.75.75 0 0 1-1.5 0v-2.5C1 1.784 1.784 1 2.75 1h2.5a.75.75 0 0 1 0 1.5ZM10 1.75a.75.75 0 0 1 .75-.75h2.5c.966 0 1.75.784 1.75 1.75v2.5a.75.75 0 0 1-1.5 0v-2.5a.25.25 0 0 0-.25-.25h-2.5a.75.75 0 0 1-.75-.75Z"/></svg>
<div class="r" style="left:4517.50px;top:1085.80px;width:94.50px;height:47.20px;background:#f6f8fa;border:1px solid #d1d9e0;border-radius:10px;"></div>
<div class="r" style="left:4564.80px;top:1086.80px;width:46.20px;height:45.20px;background:#eef1f4;border-radius:0 9px 9px 0;"></div>
<div class="r" style="left:4564.30px;top:1086.00px;width:1.00px;height:47.00px;background:#d1d9e0;"></div>
<div class="r" style="left:4531.00px;top:1108.50px;width:20.00px;height:2.50px;background:#59636e;"></div>
<div class="r" style="left:4578.50px;top:1108.50px;width:20.00px;height:2.50px;background:#59636e;"></div>
<div class="r" style="left:4587.20px;top:1099.80px;width:2.60px;height:20.00px;background:#59636e;"></div>
<div class="r" style="left:618.00px;top:1212.70px;width:3141.50px;height:1484.90px;background:#fff;border:1px solid #d1d9e0;border-radius:10px;"></div>
<div class="t" style="left:654.40px;top:1256.90px;font-size:28.00px;line-height:28.00px;color:#1f2328;-webkit-text-stroke:0.69px #1f2328;transform:scaleX(1.0454);">Annotations</div>
<div class="t" style="left:654.40px;top:1297.22px;font-size:21.00px;line-height:21.00px;color:#59636e;transform:scaleX(0.9841);">2 errors and 10 warnings</div>
<div class="r" style="left:619.00px;top:1454.60px;width:3139.50px;height:1.00px;background:#dfe3e8;"></div>
<svg class="s" style="left:654.00px;top:1368.00px;" width="28.00" height="28.00" viewBox="0 0 28 28"><circle cx="14" cy="14" r="14" fill="#b0282c"/><path d="M9.3 9.3l9.4 9.4M18.7 9.3l-9.4 9.4" stroke="#fff" stroke-width="2.6" stroke-linecap="round"/></svg>
<div class="t" style="left:703.90px;top:1369.76px;font-size:24.50px;line-height:24.50px;color:#4e5661;-webkit-text-stroke:0.60px #4e5661;transform:scaleX(1.0043);">SimplePackage / DocCoverage /</div>
<svg class="s" style="left:1069.00px;top:1369.50px;" width="26.00" height="26.00" viewBox="0 0 20 20"><ellipse cx="5.9" cy="10.2" rx="5.5" ry="8.2" fill="#fff" stroke="#a0a0a0" stroke-width="0.7"/><ellipse cx="14.1" cy="10.2" rx="5.5" ry="8.2" fill="#f2f2f2" stroke="#a0a0a0" stroke-width="0.7"/><ellipse cx="4.4" cy="10.4" rx="2.1" ry="3.6" fill="#2e1f4d"/><ellipse cx="12.6" cy="10.4" rx="2.1" ry="3.6" fill="#2e1f4d"/><circle cx="4.0" cy="8.4" r="0.7" fill="#fff"/><circle cx="12.2" cy="8.4" r="0.7" fill="#fff"/></svg>
<div class="t" style="left:1106.70px;top:1369.76px;font-size:24.50px;line-height:24.50px;color:#4e5661;-webkit-text-stroke:0.60px #4e5661;transform:scaleX(1.0166);">Check documentation coverage</div>
<div class="t" style="left:703.90px;top:1407.46px;font-size:19.10px;line-height:19.10px;color:#59636e;font-family:'Liberation Mono',monospace;">Process completed with exit code 1.</div>
<div class="r" style="left:619.00px;top:1567.53px;width:3139.50px;height:1.00px;background:#dfe3e8;"></div>
<svg class="s" style="left:654.00px;top:1480.93px;" width="28.00" height="28.00" viewBox="0 0 28 28"><circle cx="14" cy="14" r="14" fill="#b0282c"/><path d="M9.3 9.3l9.4 9.4M18.7 9.3l-9.4 9.4" stroke="#fff" stroke-width="2.6" stroke-linecap="round"/></svg>
<div class="t" style="left:703.90px;top:1482.69px;font-size:24.50px;line-height:24.50px;color:#4e5661;-webkit-text-stroke:0.60px #4e5661;transform:scaleX(1.0043);">SimplePackage / DocCoverage /</div>
<svg class="s" style="left:1069.00px;top:1482.43px;" width="26.00" height="26.00" viewBox="0 0 20 20"><ellipse cx="5.9" cy="10.2" rx="5.5" ry="8.2" fill="#fff" stroke="#a0a0a0" stroke-width="0.7"/><ellipse cx="14.1" cy="10.2" rx="5.5" ry="8.2" fill="#f2f2f2" stroke="#a0a0a0" stroke-width="0.7"/><ellipse cx="4.4" cy="10.4" rx="2.1" ry="3.6" fill="#2e1f4d"/><ellipse cx="12.6" cy="10.4" rx="2.1" ry="3.6" fill="#2e1f4d"/><circle cx="4.0" cy="8.4" r="0.7" fill="#fff"/><circle cx="12.2" cy="8.4" r="0.7" fill="#fff"/></svg>
<div class="t" style="left:1106.70px;top:1482.69px;font-size:24.50px;line-height:24.50px;color:#4e5661;-webkit-text-stroke:0.60px #4e5661;transform:scaleX(1.0166);">Check documentation coverage</div>
<div class="t" style="left:703.90px;top:1520.39px;font-size:19.10px;line-height:19.10px;color:#59636e;font-family:'Liberation Mono',monospace;">Process completed with exit code 2.</div>
<div class="r" style="left:619.00px;top:1680.46px;width:3139.50px;height:1.00px;background:#dfe3e8;"></div>
<svg class="s" style="left:654.00px;top:1593.86px;" width="28.00" height="28.00" viewBox="0 0 16 16"><path fill="#9a6700" d="M6.457 1.047c.659-1.234 2.427-1.234 3.086 0l6.082 11.378A1.75 1.75 0 0 1 14.082 15H1.918a1.75 1.75 0 0 1-1.543-2.575Zm1.763.707a.25.25 0 0 0-.44 0L1.698 13.132a.25.25 0 0 0 .22.368h12.164a.25.25 0 0 0 .22-.368Zm.53 3.996v2.5a.75.75 0 0 1-1.5 0v-2.5a.75.75 0 0 1 1.5 0ZM9 11a1 1 0 1 1-2 0 1 1 0 0 1 2 0Z"/></svg>
<div class="t" style="left:703.90px;top:1595.72px;font-size:24.50px;line-height:24.50px;color:#4e5661;-webkit-text-stroke:0.60px #4e5661;transform:scaleX(1.0731);">pyTooling/upload-artifact</div>
<div class="t" style="left:703.90px;top:1633.32px;font-size:19.10px;line-height:19.10px;color:#59636e;font-family:'Liberation Mono',monospace;">macOS doesn&#x27;t support removing hidden files.</div>
<div class="r" style="left:619.00px;top:1793.39px;width:3139.50px;height:1.00px;background:#dfe3e8;"></div>
<svg class="s" style="left:654.00px;top:1706.79px;" width="28.00" height="28.00" viewBox="0 0 16 16"><path fill="#9a6700" d="M6.457 1.047c.659-1.234 2.427-1.234 3.086 0l6.082 11.378A1.75 1.75 0 0 1 14.082 15H1.918a1.75 1.75 0 0 1-1.543-2.575Zm1.763.707a.25.25 0 0 0-.44 0L1.698 13.132a.25.25 0 0 0 .22.368h12.164a.25.25 0 0 0 .22-.368Zm.53 3.996v2.5a.75.75 0 0 1-1.5 0v-2.5a.75.75 0 0 1 1.5 0ZM9 11a1 1 0 1 1-2 0 1 1 0 0 1 2 0Z"/></svg>
<div class="t" style="left:703.90px;top:1708.65px;font-size:24.50px;line-height:24.50px;color:#4e5661;-webkit-text-stroke:0.60px #4e5661;transform:scaleX(1.0731);">pyTooling/upload-artifact</div>
<div class="t" style="left:703.90px;top:1746.25px;font-size:19.10px;line-height:19.10px;color:#59636e;font-family:'Liberation Mono',monospace;">macOS doesn&#x27;t support removing hidden files.</div>
<div class="r" style="left:619.00px;top:1906.32px;width:3139.50px;height:1.00px;background:#dfe3e8;"></div>
<svg class="s" style="left:654.00px;top:1819.72px;" width="28.00" height="28.00" viewBox="0 0 16 16"><path fill="#9a6700" d="M6.457 1.047c.659-1.234 2.427-1.234 3.086 0l6.082 11.378A1.75 1.75 0 0 1 14.082 15H1.918a1.75 1.75 0 0 1-1.543-2.575Zm1.763.707a.25.25 0 0 0-.44 0L1.698 13.132a.25.25 0 0 0 .22.368h12.164a.25.25 0 0 0 .22-.368Zm.53 3.996v2.5a.75.75 0 0 1-1.5 0v-2.5a.75.75 0 0 1 1.5 0ZM9 11a1 1 0 1 1-2 0 1 1 0 0 1 2 0Z"/></svg>
<div class="t" style="left:703.90px;top:1821.58px;font-size:24.50px;line-height:24.50px;color:#4e5661;-webkit-text-stroke:0.60px #4e5661;transform:scaleX(1.0731);">pyTooling/upload-artifact</div>
<div class="t" style="left:703.90px;top:1859.18px;font-size:19.10px;line-height:19.10px;color:#59636e;font-family:'Liberation Mono',monospace;">macOS doesn&#x27;t support removing hidden files.</div>
<div class="r" style="left:619.00px;top:2019.25px;width:3139.50px;height:1.00px;background:#dfe3e8;"></div>
<svg class="s" style="left:654.00px;top:1932.65px;" width="28.00" height="28.00" viewBox="0 0 16 16"><path fill="#9a6700" d="M6.457 1.047c.659-1.234 2.427-1.234 3.086 0l6.082 11.378A1.75 1.75 0 0 1 14.082 15H1.918a1.75 1.75 0 0 1-1.543-2.575Zm1.763.707a.25.25 0 0 0-.44 0L1.698 13.132a.25.25 0 0 0 .22.368h12.164a.25.25 0 0 0 .22-.368Zm.53 3.996v2.5a.75.75 0 0 1-1.5 0v-2.5a.75.75 0 0 1 1.5 0ZM9 11a1 1 0 1 1-2 0 1 1 0 0 1 2 0Z"/></svg>
<div class="t" style="left:703.90px;top:1934.51px;font-size:24.50px;line-height:24.50px;color:#4e5661;-webkit-text-stroke:0.60px #4e5661;transform:scaleX(1.0731);">pyTooling/upload-artifact</div>
<div class="t" style="left:703.90px;top:1972.11px;font-size:19.10px;line-height:19.10px;color:#59636e;font-family:'Liberation Mono',monospace;">macOS doesn&#x27;t support removing hidden files.</div>
<div class="r" style="left:619.00px;top:2132.18px;width:3139.50px;height:1.00px;background:#dfe3e8;"></div>
<svg class="s" style="left:654.00px;top:2045.58px;" width="28.00" height="28.00" viewBox="0 0 16 16"><path fill="#9a6700" d="M6.457 1.047c.659-1.234 2.427-1.234 3.086 0l6.082 11.378A1.75 1.75 0 0 1 14.082 15H1.918a1.75 1.75 0 0 1-1.543-2.575Zm1.763.707a.25.25 0 0 0-.44 0L1.698 13.132a.25.25 0 0 0 .22.368h12.164a.25.25 0 0 0 .22-.368Zm.53 3.996v2.5a.75.75 0 0 1-1.5 0v-2.5a.75.75 0 0 1 1.5 0ZM9 11a1 1 0 1 1-2 0 1 1 0 0 1 2 0Z"/></svg>
<div class="t" style="left:703.90px;top:2047.44px;font-size:24.50px;line-height:24.50px;color:#4e5661;-webkit-text-stroke:0.60px #4e5661;transform:scaleX(1.0731);">pyTooling/upload-artifact</div>
<div class="t" style="left:703.90px;top:2085.04px;font-size:19.10px;line-height:19.10px;color:#59636e;font-family:'Liberation Mono',monospace;">macOS doesn&#x27;t support removing hidden files.</div>
<div class="r" style="left:619.00px;top:2245.11px;width:3139.50px;height:1.00px;background:#dfe3e8;"></div>
<svg class="s" style="left:654.00px;top:2158.51px;" width="28.00" height="28.00" viewBox="0 0 16 16"><path fill="#9a6700" d="M6.457 1.047c.659-1.234 2.427-1.234 3.086 0l6.082 11.378A1.75 1.75 0 0 1 14.082 15H1.918a1.75 1.75 0 0 1-1.543-2.575Zm1.763.707a.25.25 0 0 0-.44 0L1.698 13.132a.25.25 0 0 0 .22.368h12.164a.25.25 0 0 0 .22-.368Zm.53 3.996v2.5a.75.75 0 0 1-1.5 0v-2.5a.75.75 0 0 1 1.5 0ZM9 11a1 1 0 1 1-2 0 1 1 0 0 1 2 0Z"/></svg>
<div class="t" style="left:703.90px;top:2160.37px;font-size:24.50px;line-height:24.50px;color:#4e5661;-webkit-text-stroke:0.60px #4e5661;transform:scaleX(1.0731);">pyTooling/upload-artifact</div>
<div class="t" style="left:703.90px;top:2197.97px;font-size:19.10px;line-height:19.10px;color:#59636e;font-family:'Liberation Mono',monospace;">macOS doesn&#x27;t support removing hidden files.</div>
<div class="r" style="left:619.00px;top:2358.04px;width:3139.50px;height:1.00px;background:#dfe3e8;"></div>
<svg class="s" style="left:654.00px;top:2271.44px;" width="28.00" height="28.00" viewBox="0 0 16 16"><path fill="#9a6700" d="M6.457 1.047c.659-1.234 2.427-1.234 3.086 0l6.082 11.378A1.75 1.75 0 0 1 14.082 15H1.918a1.75 1.75 0 0 1-1.543-2.575Zm1.763.707a.25.25 0 0 0-.44 0L1.698 13.132a.25.25 0 0 0 .22.368h12.164a.25.25 0 0 0 .22-.368Zm.53 3.996v2.5a.75.75 0 0 1-1.5 0v-2.5a.75.75 0 0 1 1.5 0ZM9 11a1 1 0 1 1-2 0 1 1 0 0 1 2 0Z"/></svg>
<div class="t" style="left:703.90px;top:2273.30px;font-size:24.50px;line-height:24.50px;color:#4e5661;-webkit-text-stroke:0.60px #4e5661;transform:scaleX(1.0731);">pyTooling/upload-artifact</div>
<div class="t" style="left:703.90px;top:2310.90px;font-size:19.10px;line-height:19.10px;color:#59636e;font-family:'Liberation Mono',monospace;">macOS doesn&#x27;t support removing hidden files.</div>
<div class="r" style="left:619.00px;top:2470.97px;width:3139.50px;height:1.00px;background:#dfe3e8;"></div>
<svg class="s" style="left:654.00px;top:2384.37px;" width="28.00" height="28.00" viewBox="0 0 16 16"><path fill="#9a6700" d="M6.457 1.047c.659-1.234 2.427-1.234 3.086 0l6.082 11.378A1.75 1.75 0 0 1 14.082 15H1.918a1.75 1.75 0 0 1-1.543-2.575Zm1.763.707a.25.25 0 0 0-.44 0L1.698 13.132a.25.25 0 0 0 .22.368h12.164a.25.25 0 0 0 .22-.368Zm.53 3.996v2.5a.75.75 0 0 1-1.5 0v-2.5a.75.75 0 0 1 1.5 0ZM9 11a1 1 0 1 1-2 0 1 1 0 0 1 2 0Z"/></svg>
<div class="t" style="left:703.90px;top:2386.23px;font-size:24.50px;line-height:24.50px;color:#4e5661;-webkit-text-stroke:0.60px #4e5661;transform:scaleX(1.0731);">pyTooling/upload-artifact</div>
<div class="t" style="left:703.90px;top:2423.83px;font-size:19.10px;line-height:19.10px;color:#59636e;font-family:'Liberation Mono',monospace;">macOS doesn&#x27;t support removing hidden files.</div>
<div class="r" style="left:619.00px;top:2583.90px;width:3139.50px;height:1.00px;background:#dfe3e8;"></div>
<svg class="s" style="left:654.00px;top:2497.30px;" width="28.00" height="28.00" viewBox="0 0 16 16"><path fill="#9a6700" d="M6.457 1.047c.659-1.234 2.427-1.234 3.086 0l6.082 11.378A1.75 1.75 0 0 1 14.082 15H1.918a1.75 1.75 0 0 1-1.543-2.575Zm1.763.707a.25.25 0 0 0-.44 0L1.698 13.132a.25.25 0 0 0 .22.368h12.164a.25.25 0 0 0 .22-.368Zm.53 3.996v2.5a.75.75 0 0 1-1.5 0v-2.5a.75.75 0 0 1 1.5 0ZM9 11a1 1 0 1 1-2 0 1 1 0 0 1 2 0Z"/></svg>
<div class="t" style="left:703.90px;top:2499.16px;font-size:24.50px;line-height:24.50px;color:#4e5661;-webkit-text-stroke:0.60px #4e5661;transform:scaleX(1.0731);">pyTooling/upload-artifact</div>
<div class="t" style="left:703.90px;top:2536.76px;font-size:19.10px;line-height:19.10px;color:#59636e;font-family:'Liberation Mono',monospace;">macOS doesn&#x27;t support removing hidden files.</div>
<svg class="s" style="left:654.00px;top:2610.23px;" width="28.00" height="28.00" viewBox="0 0 16 16"><path fill="#9a6700" d="M6.457 1.047c.659-1.234 2.427-1.234 3.086 0l6.082 11.378A1.75 1.75 0 0 1 14.082 15H1.918a1.75 1.75 0 0 1-1.543-2.575Zm1.763.707a.25.25 0 0 0-.44 0L1.698 13.132a.25.25 0 0 0 .22.368h12.164a.25.25 0 0 0 .22-.368Zm.53 3.996v2.5a.75.75 0 0 1-1.5 0v-2.5a.75.75 0 0 1 1.5 0ZM9 11a1 1 0 1 1-2 0 1 1 0 0 1 2 0Z"/></svg>
<div class="t" style="left:703.90px;top:2612.09px;font-size:24.50px;line-height:24.50px;color:#4e5661;-webkit-text-stroke:0.60px #4e5661;transform:scaleX(1.0731);">pyTooling/upload-artifact</div>
<div class="t" style="left:703.90px;top:2649.69px;font-size:19.10px;line-height:19.10px;color:#59636e;font-family:'Liberation Mono',monospace;">macOS doesn&#x27;t support removing hidden files.</div></body></html>
